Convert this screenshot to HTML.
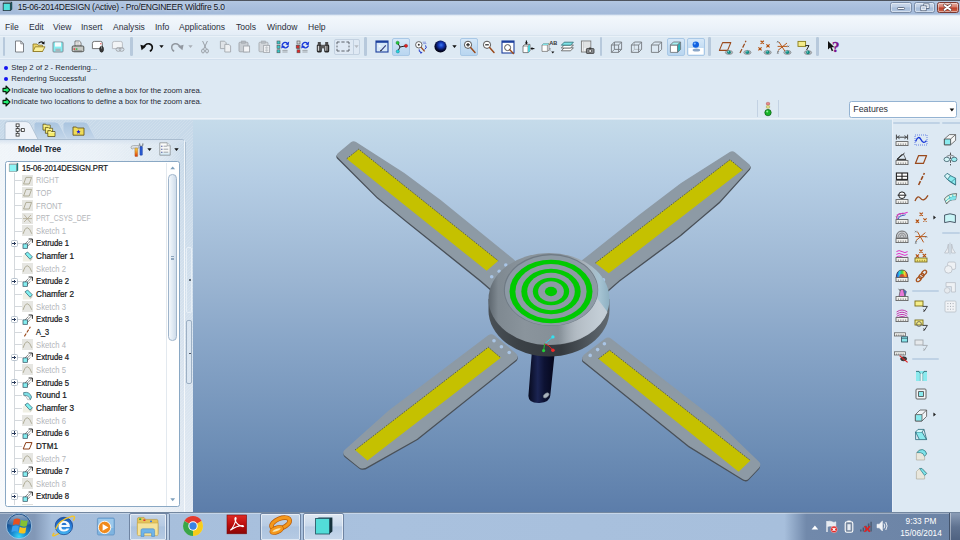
<!DOCTYPE html>
<html lang="en"><head><meta charset="utf-8"><title>15-06-2014DESIGN (Active) - Pro/ENGINEER Wildfire 5.0</title>
<style>
html,body{margin:0;padding:0}
body{width:960px;height:540px;overflow:hidden;position:relative;background:#dfe9f5;
 font-family:"Liberation Sans",sans-serif;color:#1a1a1a}
.a{position:absolute}
.t{position:absolute;white-space:nowrap;line-height:1}
svg{position:absolute;overflow:visible}
</style></head>
<body>
<div class="a" style="left:193px;top:119px;width:699px;height:393px;background:linear-gradient(180deg,#c5dbea 0%,#b5cde4 15.3%,#9bb5d2 41%,#89a6c8 56.4%,#6c8db5 84.4%,#5c7daa 100%)"></div>
<svg width="960" height="540" viewBox="0 0 960 540" style="left:0;top:0">
<defs>
<linearGradient id="gWall" x1="0" x2="1" y1="0" y2="0"><stop offset="0" stop-color="#4a5157"/><stop offset=".25" stop-color="#3b4146"/><stop offset=".6" stop-color="#34393e"/><stop offset=".85" stop-color="#525a61"/><stop offset="1" stop-color="#626a71"/></linearGradient>
<linearGradient id="gCham" x1="0" x2="1" y1="0" y2="0"><stop offset="0" stop-color="#5d666e"/><stop offset=".08" stop-color="#7f8991"/><stop offset=".3" stop-color="#8a949c"/><stop offset=".6" stop-color="#858f97"/><stop offset=".8" stop-color="#a9b3bb"/><stop offset=".92" stop-color="#a5c3d2"/><stop offset="1" stop-color="#8eb0c2"/></linearGradient>
<linearGradient id="gShaft" x1="0" x2="1" y1="0" y2="0"><stop offset="0" stop-color="#070a1e"/><stop offset=".35" stop-color="#1b2452"/><stop offset=".6" stop-color="#0d1233"/><stop offset="1" stop-color="#05071a"/></linearGradient>
<linearGradient id="gHi" gradientUnits="userSpaceOnUse" x1="558" x2="600" y1="0" y2="0"><stop offset="0" stop-color="#b8c1c9" stop-opacity="0"/><stop offset=".45" stop-color="#b8c1c9" stop-opacity=".8"/><stop offset="1" stop-color="#c5ced6" stop-opacity=".95"/></linearGradient>
<clipPath id="vp"><rect x="193" y="119" width="699" height="393"/></clipPath>
</defs>
<g clip-path="url(#vp)">
<path d="M532 350 L528.4 396 Q528.6 403.5 539.5 403 Q550 402 550.3 395.5 L555 350 Z" fill="url(#gShaft)"/>
<ellipse cx="546.2" cy="395.4" rx="3.3" ry="2" transform="rotate(-38 546.2 395.4)" fill="#aab3bd" stroke="#6d7782" stroke-width=".6"/>
<path d="M351.0 144.3 Q353.0 142.6 355.2 144.0 L403.1 174.8 L439.8 202.1 L512.1 260.8 L529.6 277.4 L499.6 297.4 L481.1 281.3 L406.1 221.2 L377.7 198.0 L338.0 158.4 Q336.2 156.6 338.2 154.9 Z" fill="#4a5159" stroke="#4a5159" stroke-width="1.6" stroke-linejoin="round"/>
<path d="M351.4 142.9 Q353.4 141.2 355.6 142.6 L403.5 173.4 L440.2 200.7 L512.5 259.4 L530.0 276.0 L500.0 296.0 L481.5 279.9 L406.5 219.8 L378.1 196.6 L338.4 157.0 Q336.6 155.2 338.6 153.5 Z" fill="#8d9aa5" stroke="#8d9aa5" stroke-width="1.6" stroke-linejoin="round"/>
<polygon points="358.7,149.2 498.3,260.8 486.7,270.8 346.7,158.7" fill="#c5c100"/>
<polyline points="346.7,158.7 358.7,149.2 498.3,260.8" fill="none" stroke="#4b4f45" stroke-width=".8" stroke-dasharray="1.6 1.2"/>
<path d="M730.6 154.0 Q732.8 152.6 734.8 154.3 L748.8 165.9 Q750.8 167.6 749.1 169.5 L718.9 202.9 L697.3 221.2 L680.6 235.4 L618.9 281.2 L600.4 297.4 L570.4 277.4 L582.9 262.4 L640.2 216.8 L681.9 185.0 Z" fill="#4a5159" stroke="#4a5159" stroke-width="1.6" stroke-linejoin="round"/>
<path d="M730.2 152.6 Q732.4 151.2 734.4 152.9 L748.4 164.5 Q750.4 166.2 748.7 168.1 L718.5 201.5 L696.9 219.8 L680.2 234.0 L618.5 279.8 L600.0 296.0 L570.0 276.0 L582.5 261.0 L639.8 215.4 L681.5 183.6 Z" fill="#8d9aa5" stroke="#8d9aa5" stroke-width="1.6" stroke-linejoin="round"/>
<polygon points="730.0,159.7 742.5,170.0 608.7,273.3 595.3,263.0" fill="#c5c100"/>
<polyline points="595.3,263.0 730.0,159.7 742.5,170.0" fill="none" stroke="#4b4f45" stroke-width=".8" stroke-dasharray="1.6 1.2"/>
<path d="M488.9 337.4 Q491.6 335.4 494.2 337.6 L514.6 354.4 Q517.1 356.4 516.9 358.2 L516.7 359.0 Q516.6 360.0 515.8 360.6 L417.2 439.4 L365.1 468.7 L362.7 469.0 Q361.1 469.2 359.9 468.2 L345.4 456.6 Q344.2 455.6 344.3 454.3 L344.3 454.0 Q344.4 453.0 345.1 452.3 L389.7 412.2 Z" fill="#4a5159" stroke="#4a5159" stroke-width="1.6" stroke-linejoin="round"/>
<path d="M488.7 336.0 Q491.4 334.0 494.0 336.2 L514.4 353.0 Q516.9 355.0 516.6 356.8 L516.5 357.6 Q516.4 358.6 515.6 359.2 L417.0 438.0 L364.9 467.3 L362.5 467.6 Q360.9 467.8 359.7 466.8 L345.2 455.2 Q344.0 454.2 344.1 452.9 L344.1 452.6 Q344.2 451.6 344.9 450.9 L389.5 410.8 Z" fill="#8d9aa5" stroke="#8d9aa5" stroke-width="1.6" stroke-linejoin="round"/>
<polygon points="488.3,347.2 500.8,357.8 367.5,460.6 355.0,450.0" fill="#c5c100"/>
<polyline points="355.0,450.0 488.3,347.2 500.8,357.8" fill="none" stroke="#4b4f45" stroke-width=".8" stroke-dasharray="1.6 1.2"/>
<path d="M605.2 340.8 Q607.9 338.7 610.6 340.8 L713.4 420.6 L758.5 463.9 Q759.2 464.6 759.3 465.6 L759.3 466.0 Q759.4 467.4 758.3 468.6 L747.9 479.6 Q746.8 480.8 745.4 480.6 L745.0 480.5 Q744.0 480.4 743.1 479.9 L689.3 446.8 L583.7 361.9 Q582.9 361.3 582.8 360.3 L582.8 359.6 Q582.6 357.9 585.1 356.0 Z" fill="#4a5159" stroke="#4a5159" stroke-width="1.6" stroke-linejoin="round"/>
<path d="M605.4 339.4 Q608.1 337.3 610.8 339.4 L713.6 419.2 L758.7 462.5 Q759.4 463.2 759.5 464.2 L759.5 464.6 Q759.6 466.0 758.5 467.2 L748.1 478.2 Q747.0 479.4 745.6 479.2 L745.2 479.1 Q744.2 479.0 743.3 478.5 L689.5 445.4 L583.9 360.5 Q583.1 359.9 583.0 358.9 L583.0 358.2 Q582.8 356.5 585.3 354.6 Z" fill="#8d9aa5" stroke="#8d9aa5" stroke-width="1.6" stroke-linejoin="round"/>
<polygon points="609.6,350.2 750.4,460.4 738.6,471.7 598.4,358.7" fill="#c5c100"/>
<polyline points="598.4,358.7 609.6,350.2 750.4,460.4" fill="none" stroke="#4b4f45" stroke-width=".8" stroke-dasharray="1.6 1.2"/>
<circle cx="494.0" cy="340.8" r="1.8" fill="#a9c5e6"/>
<circle cx="501.4" cy="346.7" r="1.8" fill="#a9c5e6"/>
<circle cx="509.2" cy="352.5" r="1.8" fill="#a9c5e6"/>
<circle cx="604.4" cy="343.8" r="1.8" fill="#a9c5e6"/>
<circle cx="597.6" cy="349.6" r="1.8" fill="#a9c5e6"/>
<circle cx="590.2" cy="355.4" r="1.8" fill="#a9c5e6"/>
<circle cx="491.7" cy="276.7" r="1.8" fill="#a9c5e6"/>
<circle cx="499.2" cy="271.2" r="1.8" fill="#a9c5e6"/>
<circle cx="505.8" cy="265.0" r="1.8" fill="#a9c5e6"/>
<circle cx="603.5" cy="279.9" r="1.8" fill="#a9c5e6"/>
<path d="M488.5 299.0 L488.5 310.5 A60.5 46.0 0 0 0 609.5 310.5 L609.5 299.0 Z" fill="url(#gWall)"/>
<ellipse cx="549.0" cy="299.0" rx="60.5" ry="46.0" fill="url(#gCham)"/>
<path d="M556 345 A60.5 46 0 0 0 607.5 312 L597 298 A46.7 35.5 0 0 1 558 325.6 Z" fill="url(#gHi)"/>
<ellipse cx="551" cy="290" rx="47.2" ry="36" fill="#6f7a84"/>
<ellipse cx="551.3" cy="290.4" rx="46.4" ry="35.2" fill="#8d9aa5"/>
<ellipse cx="551" cy="291.5" rx="41.5" ry="31.8" fill="#00ca00"/>
<ellipse cx="551" cy="291.5" rx="35.6" ry="27.4" fill="#8d9aa5"/>
<ellipse cx="551" cy="291.5" rx="29.7" ry="22.7" fill="#00ca00"/>
<ellipse cx="551" cy="291.5" rx="23.8" ry="18.7" fill="#8d9aa5"/>
<ellipse cx="551" cy="291.5" rx="18.2" ry="13.7" fill="#00ca00"/>
<ellipse cx="551" cy="291.5" rx="12.9" ry="10.2" fill="#8d9aa5"/>
<ellipse cx="551" cy="291.5" rx="6.1" ry="4.7" fill="#00ca00"/>
<path d="M544.6 343.8 L552.9 336.9" stroke="#2fd6e6" stroke-width="1" fill="none"/><circle cx="552.9" cy="336.9" r="1.7" fill="#35e0f0"/>
<path d="M544.6 343.8 L543.6 350.6" stroke="#1fc030" stroke-width="1" fill="none"/><circle cx="543.6" cy="350.6" r="1.6" fill="#22d038"/>
<path d="M544.6 343.8 Q549 344.5 552.9 350.2" stroke="#d02020" stroke-width="1" fill="none"/><circle cx="552.9" cy="350.2" r="1.8" fill="#f02828"/>
</g>
</svg>
<div class="a" style="left:0;top:0;width:960px;height:119.5px;background:#dde9f3"></div>
<div class="a" style="left:0;top:0;width:960px;height:17px;background:linear-gradient(180deg,#4a4f58 0,#4f5560 .7px,#b3c7e1 1.1px,#adc2df 4px,#a8bedc 8px,#a4bbda 13.9px,#c4d4e8 14.8px,#eaf2f9 15.7px,#f2f7fc 17px)"></div>
<svg width="11" height="11" viewBox="0 0 11 11" style="left:1.6px;top:1.4px"><path d="M1.2 2.3 L2.4 1.2 H9.9 L8.3 2.3Z" fill="#e8f4f4" stroke="#26343c" stroke-width=".6"/><path d="M8.3 2.3 L9.9 1.2 V8.5 L8.3 9.6Z" fill="#0b5c64" stroke="#1a2a32" stroke-width=".5"/><rect x="1.2" y="2.3" width="7.1" height="7.3" fill="#50e2de" stroke="#26343c" stroke-width=".8"/></svg>
<div class="t" style="left:17.7px;top:3.3px;font-size:8.5px;color:#10141c;letter-spacing:-.24px;text-shadow:0 0 3px rgba(255,255,255,.7)">15-06-2014DESIGN (Active) - Pro/ENGINEER Wildfire 5.0</div>
<div class="a" style="left:890.3px;top:1.6px;width:21.5px;height:11.8px;box-sizing:border-box;border:1px solid #7a8ca6;border-radius:2.5px;background:linear-gradient(180deg,#cbd9eb 0,#bccde4 48%,#a6bcd9 52%,#b2c6e0 100%);box-shadow:inset 0 0 0 .7px rgba(255,255,255,.6)"></div>
<div class="a" style="left:914.0px;top:1.6px;width:21.2px;height:11.8px;box-sizing:border-box;border:1px solid #7a8ca6;border-radius:2.5px;background:linear-gradient(180deg,#cbd9eb 0,#bccde4 48%,#a6bcd9 52%,#b2c6e0 100%);box-shadow:inset 0 0 0 .7px rgba(255,255,255,.6)"></div>
<div class="a" style="left:937.0px;top:1.6px;width:21.8px;height:11.8px;box-sizing:border-box;border:1px solid #7a3a32;border-radius:2.5px;background:linear-gradient(180deg,#e6b0a4 0,#d47866 48%,#bc3e28 52%,#cc6448 100%);box-shadow:inset 0 0 0 .7px rgba(255,255,255,.6)"></div>
<div class="a" style="left:897px;top:7.1px;width:8.2px;height:3.4px;background:#fdfdfe;border:.8px solid #66748a;border-radius:1.2px;box-sizing:border-box"></div>
<svg width="10" height="9" viewBox="0 0 10 9" style="left:919.6px;top:3px"><rect x="3.8" y=".9" width="5.2" height="4.6" fill="#b9c9df" stroke="#4f5d73" stroke-width=".8"/><rect x="4.6" y="1.8" width="3.6" height="2.8" fill="none" stroke="#fff" stroke-width=".8"/><rect x=".9" y="2.9" width="5.2" height="4.8" fill="#b9c9df" stroke="#4f5d73" stroke-width=".8"/><rect x="1.7" y="3.8" width="3.6" height="3" fill="none" stroke="#fff" stroke-width=".8"/></svg>
<svg width="9" height="7" viewBox="0 0 9 7" style="left:943.3px;top:4px"><path d="M1.6 1.2 L7.4 5.8 M7.4 1.2 L1.6 5.8" stroke="#5b3a3a" stroke-width="3" stroke-linecap="round"/><path d="M1.6 1.2 L7.4 5.8 M7.4 1.2 L1.6 5.8" stroke="#fff" stroke-width="1.9" stroke-linecap="round"/></svg>
<div class="a" style="left:0;top:17px;width:960px;height:19px;background:linear-gradient(180deg,#f2f7fc 0,#ebf2f9 55%,#e3ecf6 100%)"></div>
<div class="t" style="left:5px;top:23.1px;font-size:8.55px;color:#2a2f3a">File</div>
<div class="t" style="left:29px;top:23.1px;font-size:8.55px;color:#2a2f3a">Edit</div>
<div class="t" style="left:53px;top:23.1px;font-size:8.55px;color:#2a2f3a">View</div>
<div class="t" style="left:81px;top:23.1px;font-size:8.55px;color:#2a2f3a">Insert</div>
<div class="t" style="left:113px;top:23.1px;font-size:8.55px;color:#2a2f3a">Analysis</div>
<div class="t" style="left:155px;top:23.1px;font-size:8.55px;color:#2a2f3a">Info</div>
<div class="t" style="left:179px;top:23.1px;font-size:8.55px;color:#2a2f3a">Applications</div>
<div class="t" style="left:236px;top:23.1px;font-size:8.55px;color:#2a2f3a">Tools</div>
<div class="t" style="left:267px;top:23.1px;font-size:8.55px;color:#2a2f3a">Window</div>
<div class="t" style="left:308px;top:23.1px;font-size:8.55px;color:#2a2f3a">Help</div>
<div class="a" style="left:0;top:35.4px;width:960px;height:1px;background:#d8e4ef"></div>
<div class="a" style="left:0;top:36.4px;width:960px;height:21.6px;background:#dde9f3"></div>
<div class="a" style="left:0;top:36.4px;width:960px;height:1px;background:#e9f1f8"></div>
<div class="a" style="left:0;top:58px;width:960px;height:1px;background:#eaf1f9"></div>
<div class="a" style="left:0;top:59px;width:960px;height:1px;background:#d2dfed"></div>
<div class="t" style="left:11.3px;top:63.7px;font-size:7.7px;color:#252a33">Step 2 of 2 - Rendering...</div>
<div class="a" style="left:4.1px;top:65.9px;width:3.9px;height:3.9px;border-radius:2px;background:#1414f0"></div>
<div class="t" style="left:11.3px;top:75.1px;font-size:7.7px;color:#252a33">Rendering Successful</div>
<div class="a" style="left:4.1px;top:77.3px;width:3.9px;height:3.9px;border-radius:2px;background:#1414f0"></div>
<div class="t" style="left:11.3px;top:86.6px;font-size:7.7px;color:#252a33">Indicate two locations to define a box for the zoom area.</div>
<svg width="9" height="10" viewBox="0 0 9 10" style="left:1.6px;top:85.3px"><path d="M1 3.4 H4 V1 L8 5 L4 9 V6.6 H1Z" fill="#1ff070" stroke="#0a1c0c" stroke-width="1.1" stroke-linejoin="round"/></svg>
<div class="t" style="left:11.3px;top:98.0px;font-size:7.7px;color:#252a33">Indicate two locations to define a box for the zoom area.</div>
<svg width="9" height="10" viewBox="0 0 9 10" style="left:1.6px;top:96.7px"><path d="M1 3.4 H4 V1 L8 5 L4 9 V6.6 H1Z" fill="#1ff070" stroke="#0a1c0c" stroke-width="1.1" stroke-linejoin="round"/></svg>
<div class="a" style="left:0;top:118.2px;width:960px;height:1.3px;background:#edf3f9"></div>
<div class="a" style="left:849.4px;top:101px;width:107.2px;height:16.6px;box-sizing:border-box;border:1px solid #94b3d2;border-radius:2.5px;background:#fff"></div>
<div class="t" style="left:853.3px;top:104.6px;font-size:8.8px;color:#2a2f3a">Features</div>
<svg width="6" height="4" viewBox="0 0 6 4" style="left:948.6px;top:107.6px"><path d="M.6 .5 H5.2 L2.9 3.4Z" fill="#111"/></svg>
<div class="a" style="left:756.6px;top:100px;width:1px;height:17px;background:#c3d2e3"></div>
<div class="a" style="left:778.4px;top:100px;width:1px;height:17px;background:#c3d2e3"></div>
<svg width="8" height="15" viewBox="0 0 8 15" style="left:763.6px;top:101.6px"><rect x="2.4" y=".4" width="3.2" height="2.6" rx=".8" fill="#e88a8a" stroke="#b05050" stroke-width=".5"/><rect x="2.4" y="3.6" width="3.2" height="2.6" rx=".8" fill="#e6e08a" stroke="#a09a40" stroke-width=".5"/><circle cx="4" cy="10.6" r="3.2" fill="#18b428" stroke="#0a5a14" stroke-width=".7"/><circle cx="3.2" cy="9.6" r="1" fill="#8ff09a"/></svg>
<div class="a" style="left:2.5px;top:37.2px;width:2.5px;height:19.2px;background:#b7c9dc;border-radius:1.2px"></div>
<svg width="11" height="13" viewBox="0 0 11 13" style="left:14.0px;top:40.2px"><path d="M1.5 1 H6.8 L9.5 3.8 V12 H1.5Z" fill="#fff" stroke="#70757c" stroke-width=".9" stroke-linejoin="round"/><path d="M6.8 1 V3.8 H9.5" fill="none" stroke="#70757c" stroke-width=".8"/></svg>
<svg width="14" height="13" viewBox="0 0 14 13" style="left:31.7px;top:40.2px"><path d="M1 4 H5 L6 5.2 H10.5 V11.5 H1Z" fill="#ecd66a" stroke="#8a7420" stroke-width=".8" stroke-linejoin="round"/><path d="M1 11.5 L3.2 6.8 H13 L10.5 11.5Z" fill="#faf09a" stroke="#8a7420" stroke-width=".8" stroke-linejoin="round"/><path d="M6.5 3.4 Q9 .8 11.4 2.8" fill="none" stroke="#111" stroke-width="1.1"/><path d="M12.6 1.2 L12.4 4.6 L9.6 3.4Z" fill="#111"/></svg>
<svg width="12" height="12" viewBox="0 0 12 12" style="left:52.3px;top:40.7px"><rect x="1" y="1" width="10" height="10" rx=".8" fill="#84eef2" stroke="#7a858e" stroke-width=".9"/><rect x="3" y="1.4" width="6" height="4.2" fill="#f6fcfd"/><rect x="3.4" y="7.6" width="5.2" height="3" fill="#aab3ba"/></svg>
<svg width="14" height="13" viewBox="0 0 14 13" style="left:71.3px;top:40.2px"><path d="M4 6 V1 H8.4 L10 2.6 V6Z" fill="#fff" stroke="#555" stroke-width=".8"/><path d="M5.2 2.8 H8.4 M5.2 4.2 H8.8" stroke="#888" stroke-width=".6"/><rect x="1.2" y="6" width="11.6" height="5.6" rx="1" fill="#c6c8c4" stroke="#454846" stroke-width=".9"/><rect x="2.6" y="8.4" width="1.6" height="1.3" fill="#e02020"/><rect x="4.8" y="8.4" width="1.6" height="1.3" fill="#20b030"/><rect x="3" y="10.6" width="8" height="1.6" fill="#6a6d6b"/></svg>
<svg width="14" height="13" viewBox="0 0 14 13" style="left:91.0px;top:40.2px"><path d="M1.4 3.4 Q1.4 1.4 3.4 1.4 H9.6 Q11.4 1.4 11.4 3.2 V8.6 H1.4Z" fill="#fff" stroke="#666" stroke-width=".9"/><rect x="9.3" y="3.2" width="1.1" height="1.1" fill="#e02020"/><ellipse cx="10.6" cy="9.2" rx="1.9" ry="3" fill="#3b3b3b" stroke="#111" stroke-width=".6"/><path d="M10.6 6.4 V8.6" stroke="#ccc" stroke-width=".6"/></svg>
<svg width="14" height="13" viewBox="0 0 14 13" style="left:111.0px;top:40.2px"><path d="M1.4 3.4 Q1.4 1.4 3.4 1.4 H9.6 Q11.4 1.4 11.4 3.2 V8.6 H1.4Z" fill="#f2f4f6" stroke="#b4b8bd" stroke-width=".9"/><ellipse cx="7.4" cy="9.4" rx="2.4" ry="1.9" fill="none" stroke="#a4a8ad" stroke-width="1"/><ellipse cx="10.6" cy="9.4" rx="2.4" ry="1.9" fill="none" stroke="#a4a8ad" stroke-width="1"/></svg>
<div class="a" style="left:130.4px;top:37.2px;width:2.5px;height:19.2px;background:#b7c9dc;border-radius:1.2px"></div>
<svg width="14" height="11" viewBox="0 0 14 11" style="left:140.3px;top:41.2px"><path d="M3.4 6.8 Q5.4 2.2 9.2 2.8 Q12.8 3.6 12.2 7.4 Q11.8 9.4 9.8 10.2" fill="none" stroke="#111" stroke-width="1.7"/><path d="M.4 3.8 L6 5.2 L1.6 9.2Z" fill="#111"/></svg>
<svg width="5" height="3.4" viewBox="0 0 5 3.4" style="left:159.2px;top:45.4px"><path d="M.3 .3 H4.7 L2.5 3.1Z" fill="#111"/></svg>
<svg width="14" height="11" viewBox="0 0 14 11" style="left:169.5px;top:41.2px"><path d="M10.6 6.8 Q8.6 2.2 4.8 2.8 Q1.2 3.6 1.8 7.4 Q2.2 9.4 4.2 10.2" fill="none" stroke="#9298a0" stroke-width="1.5"/><path d="M13.6 3.8 L8 5.2 L12.4 9.2Z" fill="#9298a0"/></svg>
<svg width="5" height="3.4" viewBox="0 0 5 3.4" style="left:187.5px;top:45.4px"><path d="M.3 .3 H4.7 L2.5 3.1Z" fill="#aab0b8"/></svg>
<svg width="10" height="14" viewBox="0 0 10 14" style="left:200.0px;top:39.7px"><path d="M2.6 1 L6.4 9.2 M7.4 1 L3.6 9.2" stroke="#9aa0a7" stroke-width="1"/><ellipse cx="3" cy="11" rx="1.4" ry="2" fill="none" stroke="#9aa0a7" stroke-width="1"/><ellipse cx="7" cy="11" rx="1.4" ry="2" fill="none" stroke="#9aa0a7" stroke-width="1"/></svg>
<svg width="13" height="13" viewBox="0 0 13 13" style="left:218.5px;top:40.2px"><path d="M1.4 1.2 H5.6 L7.2 2.8 V8.6 H1.4Z" fill="#dfe3e7" stroke="#a3a8ae" stroke-width=".9"/><path d="M5.8 4.4 H10 L11.6 6 V12 H5.8Z" fill="#eef0f2" stroke="#a3a8ae" stroke-width=".9"/></svg>
<svg width="13" height="13" viewBox="0 0 13 13" style="left:237.7px;top:40.2px"><rect x="1" y="2.2" width="9" height="9.6" rx="1" fill="#c9ced3" stroke="#a0a5ab" stroke-width=".9"/><rect x="3.6" y="1" width="3.8" height="2.2" fill="#b3b8be" stroke="#a0a5ab" stroke-width=".6"/><rect x="5.6" y="6" width="6" height="6" fill="#f3f4f6" stroke="#a0a5ab" stroke-width=".9"/></svg>
<svg width="13" height="13" viewBox="0 0 13 13" style="left:258.2px;top:40.2px"><rect x="1" y="2.2" width="9" height="9.6" rx="1" fill="#d3d7db" stroke="#a6abb1" stroke-width=".9"/><rect x="3.6" y="1" width="3.8" height="2.2" fill="#b9bec4" stroke="#a6abb1" stroke-width=".6"/><rect x="5.6" y="5.4" width="6" height="7" fill="#f3f4f6" stroke="#a6abb1" stroke-width=".9"/><path d="M7 7.4 H10.4 M7 9 H10.4 M7 10.6 H10.4 M8.7 6 V12" stroke="#b4b8be" stroke-width=".6"/></svg>
<svg width="14" height="14" viewBox="0 0 14 14" style="left:276.3px;top:39.7px"><rect x="1" y="1" width="3" height="3" fill="#35c8c8" stroke="#555" stroke-width=".6"/><rect x="1" y="5.4" width="3" height="3" fill="#35c8c8" stroke="#555" stroke-width=".6"/><rect x="1" y="9.8" width="3" height="3" fill="#35c8c8" stroke="#555" stroke-width=".6"/><path d="M6 4.8 Q8.6 .6 11.6 3.6" fill="none" stroke="#1838d8" stroke-width="1.3"/><path d="M13.2 1.6 L12.6 5.6 L9.4 4.2Z" fill="#1838d8"/><path d="M12.6 5.6 Q10 9.4 7 6.8" fill="none" stroke="#1838d8" stroke-width="1.3"/><path d="M5.2 8.6 L5.8 4.8 L9 6.4Z" fill="#1838d8"/><path d="M6.4 10.4 H11.6 M6.4 12 H11.6" stroke="#9a9ea4" stroke-width=".9"/></svg>
<svg width="14" height="14" viewBox="0 0 14 14" style="left:295.5px;top:39.7px"><rect x="1" y="1" width="3" height="3" fill="#d0d4d8" stroke="#555" stroke-width=".6"/><rect x="1" y="5.4" width="3" height="3" fill="#d0d4d8" stroke="#555" stroke-width=".6"/><rect x="1" y="9.8" width="3" height="3" fill="#e02828" stroke="#555" stroke-width=".6"/><path d="M6 4.8 Q8.6 .6 11.6 3.6" fill="none" stroke="#1838d8" stroke-width="1.3"/><path d="M13.2 1.6 L12.6 5.6 L9.4 4.2Z" fill="#1838d8"/><path d="M12.6 5.6 Q10 9.4 7 6.8" fill="none" stroke="#1838d8" stroke-width="1.3"/><path d="M5.2 8.6 L5.8 4.8 L9 6.4Z" fill="#1838d8"/><path d="M6.4 10.4 H11.6 M6.4 12 H11.6" stroke="#9a9ea4" stroke-width=".9"/></svg>
<svg width="3.4" height="3.4" viewBox="0 0 3.4 3.4" style="left:295.8px;top:44.8px"><rect x=".2" y=".2" width="3" height="3" fill="#e02828" stroke="#555" stroke-width=".6"/></svg>
<svg width="14" height="12" viewBox="0 0 14 12" style="left:316.3px;top:40.7px"><rect x=".8" y="3.4" width="5" height="8" rx="1.3" fill="#2a2a2a"/><rect x="8.2" y="3.4" width="5" height="8" rx="1.3" fill="#2a2a2a"/><rect x="1.8" y="1" width="3" height="3" fill="#4a4a4a"/><rect x="9.2" y="1" width="3" height="3" fill="#4a4a4a"/><rect x="5.4" y="3.8" width="3.2" height="3.6" fill="#5a5a5a"/><rect x="1.8" y="4.8" width="1.3" height="5" fill="#d0d0d0"/><rect x="9.2" y="4.8" width="1.3" height="5" fill="#d0d0d0"/><rect x="3.6" y="4.8" width=".8" height="5" fill="#8a8a8a"/><rect x="11" y="4.8" width=".8" height="5" fill="#8a8a8a"/></svg>
<div class="a" style="left:334.2px;top:38.6px;width:26.3px;height:16.8px;box-sizing:border-box;border:1px solid #c3d1e0;border-radius:2px;background:#dfe9f4"></div>
<div class="a" style="left:352.8px;top:39.2px;width:1px;height:15.6px;background:#c3d1e0"></div>
<svg width="14" height="11" viewBox="0 0 14 11" style="left:336.4px;top:41.2px"><path d="M1 3.2 V1 H3.6 M5.4 1 H8.6 M10.4 1 H13 V3.2 M13 4.6 V6.4 M13 7.8 V10 H10.4 M8.6 10 H5.4 M3.6 10 H1 V7.8 M1 6.4 V4.6" fill="none" stroke="#5c626a" stroke-width="1"/></svg>
<svg width="5" height="3.4" viewBox="0 0 5 3.4" style="left:354.2px;top:45.4px"><path d="M.3 .3 H4.7 L2.5 3.1Z" fill="#b4bac2"/></svg>
<div class="a" style="left:364.2px;top:37.2px;width:2.5px;height:19.2px;background:#b7c9dc;border-radius:1.2px"></div>
<svg width="14" height="13" viewBox="0 0 14 13" style="left:374.7px;top:40.2px"><rect x="1" y="1" width="12" height="11" fill="#d6e7f8" stroke="#1c3f9c" stroke-width="1.1"/><rect x="1" y="1" width="12" height="1.8" fill="#1c3f9c"/><path d="M3.6 4.6 L6.4 6.2 L3.8 7.6Z" fill="#f4f9fe"/><path d="M6 10.6 L10.8 5.4" stroke="#333a78" stroke-width="1.1"/><path d="M5 11.6 L5.6 9.8 L6.8 10.8Z" fill="#111"/></svg>
<div class="a" style="left:392.2px;top:38.0px;width:17.8px;height:18.0px;box-sizing:border-box;border:1px solid #a9c8e6;border-radius:2px;background:linear-gradient(180deg,#d6e8f8 0,#c3dcf3 55%,#b9d6f0 100%)"></div>
<svg width="14" height="14" viewBox="0 0 14 14" style="left:393.8px;top:39.7px"><path d="M3.6 2.8 L6 7 L12 5.8 M6 7 L3.8 11.4" stroke="#222" stroke-width="1" fill="none"/><circle cx="3.6" cy="2.8" r="1.6" fill="#22c838" stroke="#0a6a18" stroke-width=".4"/><circle cx="12" cy="5.8" r="1.6" fill="#e82020" stroke="#7a0c0c" stroke-width=".4"/><circle cx="3.8" cy="11.4" r="1.6" fill="#28d6e0" stroke="#0a6a78" stroke-width=".4"/></svg>
<svg width="14" height="14" viewBox="0 0 14 14" style="left:413.8px;top:39.7px"><circle cx="4.8" cy="4.8" r="3.2" fill="#fff" stroke="#555" stroke-width=".9"/><circle cx="4.8" cy="4.8" r="1" fill="#333"/><path d="M7 7.2 L10.6 11.4" stroke="#9a4a1c" stroke-width="1.3"/><path d="M8.6 2.2 H12 M9.2 3.6 H12.4" stroke="#7a8ad8" stroke-width=".8"/><path d="M11.6 5.4 Q13.4 8.4 10.6 9.4" fill="none" stroke="#2038c8" stroke-width="1"/><path d="M5.2 9.4 Q4.4 12 7.4 12.6" fill="none" stroke="#2038c8" stroke-width="1"/><path d="M6.4 11.2 L8.6 12.8 L6.4 13.8Z" fill="#2038c8"/></svg>
<svg width="13" height="13" viewBox="0 0 13 13" style="left:434.0px;top:40.2px"><defs><radialGradient id="gSph" cx=".55" cy=".38" r=".6"><stop offset="0" stop-color="#3a78f0"/><stop offset=".35" stop-color="#1438b8"/><stop offset=".75" stop-color="#060c3a"/><stop offset="1" stop-color="#02030f"/></radialGradient></defs><circle cx="6.5" cy="6.5" r="6.1" fill="url(#gSph)"/></svg>
<svg width="5" height="3.4" viewBox="0 0 5 3.4" style="left:452.2px;top:45.4px"><path d="M.3 .3 H4.7 L2.5 3.1Z" fill="#111"/></svg>
<div class="a" style="left:460.3px;top:38.0px;width:18.0px;height:18.0px;box-sizing:border-box;border:1px solid #a9c8e6;border-radius:2px;background:linear-gradient(180deg,#d6e8f8 0,#c3dcf3 55%,#b9d6f0 100%)"></div>
<svg width="13" height="13.5" viewBox="0 0 13 13.5" style="left:462.9px;top:40.0px"><circle cx="5" cy="4.8" r="3.6" fill="#fff" stroke="#555" stroke-width="1"/><path d="M7.6 7.6 L12 12.4" stroke="#9a4a1c" stroke-width="1.5" stroke-linecap="round"/><path d="M3.2 4.8 H6.8" stroke="#222" stroke-width="1.2"/><path d="M5 3 V6.6" stroke="#222" stroke-width="1.2"/></svg>
<svg width="13" height="13.5" viewBox="0 0 13 13.5" style="left:482.4px;top:40.0px"><circle cx="5" cy="4.8" r="3.6" fill="#fff" stroke="#555" stroke-width="1"/><path d="M7.6 7.6 L12 12.4" stroke="#9a4a1c" stroke-width="1.5" stroke-linecap="round"/><path d="M3.2 4.8 H6.8" stroke="#222" stroke-width="1.2"/></svg>
<svg width="14" height="14" viewBox="0 0 14 14" style="left:501.0px;top:39.7px"><rect x="1" y="1" width="12" height="12" fill="#fff" stroke="#1c3f9c" stroke-width="1.1"/><rect x="1" y="1" width="12" height="1.8" fill="#1c3f9c"/><circle cx="6.6" cy="7.6" r="3" fill="#fff" stroke="#555" stroke-width="1"/><path d="M8.8 9.8 L12.4 13.4" stroke="#9a4a1c" stroke-width="1.4" stroke-linecap="round"/></svg>
<svg width="14" height="14" viewBox="0 0 14 14" style="left:520.5px;top:39.7px"><path d="M2 6 L4 4.4 H9 V11 L7 12.6 H2Z" fill="#fff" stroke="#666" stroke-width=".8" stroke-linejoin="round"/><path d="M7 6 V12.6 M2 6 H7 L9 4.4" fill="none" stroke="#666" stroke-width=".7"/><path d="M7 6 L9 4.4 V11 L7 12.6Z" fill="#48d0d8"/><path d="M5.4 .6 V3.4" stroke="#111" stroke-width="1.1"/><path d="M3.8 2.6 H7 L5.4 4.6Z" fill="#111"/><path d="M13.4 8.6 H10.6" stroke="#111" stroke-width="1.1"/><path d="M11.4 7 V10.2 L9.4 8.6Z" fill="#111"/></svg>
<svg width="15" height="14" viewBox="0 0 15 14" style="left:540.8px;top:39.7px"><path d="M1 5 L2.6 3.6 H8 V10 L6.4 11.4 H1Z" fill="#fff" stroke="#777" stroke-width=".8" stroke-linejoin="round"/><path d="M1 5 H6.4 L8 3.6 M6.4 5 V11.4" fill="none" stroke="#777" stroke-width=".7"/><path d="M1 5 L2.6 3.6 H8 L6.4 5Z" fill="#7fe0e4"/><text x="8.2" y="5.2" font-family="Liberation Sans,sans-serif" font-size="5.6" font-weight="bold" fill="#333">AB</text><path d="M9 8.4 V10.6" stroke="#333" stroke-width=".9" stroke-dasharray="1 .8"/><path d="M10.2 11.6 H13.4 L11.8 13.6Z" fill="#111"/></svg>
<svg width="15" height="13" viewBox="0 0 15 13" style="left:560.0px;top:40.2px"><path d="M1.4 10.8 L4.2 7.8 H13.4 L10.6 10.8Z" fill="#fff" stroke="#555" stroke-width=".8" stroke-linejoin="round"/><path d="M1.4 8 L4.2 5 H13.4 L10.6 8Z" fill="#fff" stroke="#555" stroke-width=".8" stroke-linejoin="round"/><path d="M1.4 5.2 L4.2 2.2 H13.4 L10.6 5.2Z" fill="#7fe4e8" stroke="#2a6a72" stroke-width=".8" stroke-linejoin="round"/></svg>
<svg width="15" height="14" viewBox="0 0 15 14" style="left:579.5px;top:39.7px"><rect x="1.4" y="1" width="9.4" height="11" fill="#f1f2f3" stroke="#777" stroke-width=".9"/><path d="M3.4 1 V12 M3.4 3 H10.8 M3.4 5 H10.8 M3.4 7 H10.8" stroke="#b8bcc0" stroke-width=".6"/><rect x="6.4" y="8.6" width="7.6" height="4.8" rx=".6" fill="#8a8d90" stroke="#333" stroke-width=".8"/><circle cx="10.2" cy="11" r="1.5" fill="#e8e8e8" stroke="#333" stroke-width=".6"/><rect x="8.8" y="7.6" width="2.4" height="1.2" fill="#333"/></svg>
<div class="a" style="left:599.5px;top:37.2px;width:2.5px;height:19.2px;background:#b7c9dc;border-radius:1.2px"></div>
<svg width="13" height="14" viewBox="0 0 13 14" style="left:610.2px;top:39.7px"><path d="M4.4 2 V9.4 H11.6 M4.4 9.4 L1.4 12.4" fill="none" stroke="#74797f" stroke-width=".9"/><path d="M1.4 5 H8.6 V12.4 H1.4Z" fill="none" stroke="#74797f" stroke-width=".9"/><path d="M1.4 5 L4.4 2 H11.6 L8.6 5" fill="none" stroke="#74797f" stroke-width=".9"/><path d="M11.6 2 V9.4 L8.6 12.4" fill="none" stroke="#74797f" stroke-width=".9"/></svg>
<svg width="13" height="14" viewBox="0 0 13 14" style="left:630.2px;top:39.7px"><path d="M4.4 2 V9.4 H11.6 M4.4 9.4 L1.4 12.4" fill="none" stroke="#a9adb2" stroke-width=".7"/><path d="M1.4 5 H8.6 V12.4 H1.4Z" fill="none" stroke="#74797f" stroke-width=".9"/><path d="M1.4 5 L4.4 2 H11.6 L8.6 5" fill="none" stroke="#74797f" stroke-width=".9"/><path d="M11.6 2 V9.4 L8.6 12.4" fill="none" stroke="#74797f" stroke-width=".9"/></svg>
<svg width="13" height="14" viewBox="0 0 13 14" style="left:649.8px;top:39.7px"><path d="M1.4 5 H8.6 V12.4 H1.4Z" fill="none" stroke="#74797f" stroke-width=".9"/><path d="M1.4 5 L4.4 2 H11.6 L8.6 5" fill="none" stroke="#74797f" stroke-width=".9"/><path d="M11.6 2 V9.4 L8.6 12.4" fill="none" stroke="#74797f" stroke-width=".9"/></svg>
<div class="a" style="left:667.0px;top:38.0px;width:17.7px;height:18.0px;box-sizing:border-box;border:1px solid #a9c8e6;border-radius:2px;background:linear-gradient(180deg,#d6e8f8 0,#c3dcf3 55%,#b9d6f0 100%)"></div>
<svg width="13" height="14" viewBox="0 0 13 14" style="left:669.3px;top:39.7px"><path d="M1.4 5 H8.6 V12.4 H1.4Z" fill="#fff" stroke="#74797f" stroke-width=".9"/><path d="M1.4 5 L4.4 2 H11.6 L8.6 5Z" fill="#a6f0f2" stroke="#74797f" stroke-width=".9"/><path d="M11.6 2 V9.4 L8.6 12.4 V5Z" fill="#2ab6bc" stroke="#74797f" stroke-width=".9"/></svg>
<div class="a" style="left:687.0px;top:38.0px;width:17.7px;height:18.0px;box-sizing:border-box;border:1px solid #a9c8e6;border-radius:2px;background:linear-gradient(180deg,#d6e8f8 0,#c3dcf3 55%,#b9d6f0 100%)"></div>
<svg width="16" height="15" viewBox="0 0 16 15" style="left:687.8px;top:39.6px"><rect x=".4" y="8" width="15.2" height="6.6" fill="#fff"/><ellipse cx="8.4" cy="10" rx="3.8" ry="1.6" fill="#8aa6c8"/><circle cx="7.8" cy="4.6" r="3.2" fill="#1060e0"/><circle cx="6.8" cy="3.6" r="1.1" fill="#78b4ff"/></svg>
<div class="a" style="left:708.0px;top:37.2px;width:2.5px;height:19.2px;background:#b7c9dc;border-radius:1.2px"></div>
<svg width="15" height="14" viewBox="0 0 15 14" style="left:717.5px;top:39.7px"><path d="M1.4 10.4 L4.6 2.6 H12.8 L9.6 10.4Z" fill="none" stroke="#9a4a1c" stroke-width="1.1" stroke-linejoin="round"/><ellipse cx="11" cy="12.4" rx="3.7" ry="2" fill="#b4b9bd" stroke="#6c7176" stroke-width=".5"/><circle cx="11" cy="12.2" r="1.8" fill="#0f8a82"/><circle cx="10.5" cy="11.7" r=".6" fill="#8ae8de"/></svg>
<svg width="13" height="14" viewBox="0 0 13 14" style="left:738.2px;top:39.7px"><path d="M2 13 L8 .8" stroke="#9a4a1c" stroke-width="1.2" stroke-dasharray="4.4 1.6"/><ellipse cx="9.4" cy="12.4" rx="3.7" ry="2" fill="#b4b9bd" stroke="#6c7176" stroke-width=".5"/><circle cx="9.4" cy="12.2" r="1.8" fill="#0f8a82"/><circle cx="8.9" cy="11.7" r=".6" fill="#8ae8de"/></svg>
<svg width="14" height="14" viewBox="0 0 14 14" style="left:756.6px;top:39.7px"><path d="M3.6 .8 L6.8 3.8 M6.8 .8 L3.6 3.8 M1.4 7.4 L4.6 10.4 M4.6 7.4 L1.4 10.4 M9.4 4.4 L12.6 7.4 M12.6 4.4 L9.4 7.4" stroke="#b4500e" stroke-width="1.2"/><ellipse cx="10.6" cy="12.4" rx="3.7" ry="2" fill="#b4b9bd" stroke="#6c7176" stroke-width=".5"/><circle cx="10.6" cy="12.2" r="1.8" fill="#0f8a82"/><circle cx="10.1" cy="11.7" r=".6" fill="#8ae8de"/></svg>
<svg width="15" height="14" viewBox="0 0 15 14" style="left:775.8px;top:39.7px"><path d="M3 2 L9.4 12 M11 3 L2 10.4 M1.6 6.4 H11.6" stroke="#b85a1c" stroke-width="1"/><path d="M1 1 L2.6 2.6 M2.6 1 L1 2.6 M11.6 5.6 L13.2 7.2 M13.2 5.6 L11.6 7.2 M1 11.4 H2.8 L1 13.2 H2.8" stroke="#555" stroke-width=".6" fill="none"/><ellipse cx="11.4" cy="12.4" rx="3.7" ry="2" fill="#b4b9bd" stroke="#6c7176" stroke-width=".5"/><circle cx="11.4" cy="12.2" r="1.8" fill="#0f8a82"/><circle cx="10.9" cy="11.7" r=".6" fill="#8ae8de"/></svg>
<svg width="14" height="14" viewBox="0 0 14 14" style="left:796.6px;top:39.7px"><rect x="1" y="1.4" width="7.6" height="5" fill="#f4ec8a" stroke="#8a7d1c" stroke-width=".9"/><path d="M8.4 5.6 H12 L9.6 10" fill="none" stroke="#222" stroke-width="1"/><ellipse cx="11" cy="12.6" rx="3.7" ry="2" fill="#b4b9bd" stroke="#6c7176" stroke-width=".5"/><circle cx="11" cy="12.4" r="1.8" fill="#0f8a82"/><circle cx="10.5" cy="11.9" r=".6" fill="#8ae8de"/></svg>
<div class="a" style="left:816.1px;top:37.2px;width:2.5px;height:19.2px;background:#b7c9dc;border-radius:1.2px"></div>
<svg width="12" height="13" viewBox="0 0 12 13" style="left:827.1px;top:40.2px"><path d="M1 1 V9.6 L3.2 7.6 L4.8 11.2 L6.2 10.6 L4.6 7.2 H7.4Z" fill="#111"/><text x="5" y="11.8" font-family="Liberation Serif,serif" font-size="15" font-weight="bold" fill="#7a128c" stroke="#7a128c" stroke-width=".3">?</text></svg>
<div class="a" style="left:0;top:119.5px;width:193px;height:392px;background:repeating-linear-gradient(135deg,rgba(255,255,255,.15) 0,rgba(255,255,255,.15) .7px,rgba(255,255,255,0) .7px,rgba(255,255,255,0) 2.1px),linear-gradient(180deg,#c7d9e9 0,#cbdbea 20%,#d6e2ee 60%,#e1e9f2 100%)"></div>
<svg width="110" height="22" viewBox="0 0 110 22" style="left:0;top:119px"><defs><linearGradient id="gTab" x1="0" x2="0" y1="0" y2="1"><stop offset="0" stop-color="#a9c4df"/><stop offset="1" stop-color="#c3d6e9"/></linearGradient></defs><path d="M63 20 V5.5 Q63 3 65.5 3 H84 Q87 3 88.6 6 L96 20Z" fill="url(#gTab)" stroke="#cfdeed" stroke-width=".8"/><path d="M34 20 V5.5 Q34 3 36.5 3 H55 Q58 3 59.6 6 L67 20Z" fill="url(#gTab)" stroke="#cfdeed" stroke-width=".8"/><path d="M5 21 V5.5 Q5 2.6 7.8 2.6 H26 Q29 2.6 30.6 5.6 L38.4 21Z" fill="#edf2f9" stroke="#a9bccf" stroke-width=".8"/></svg>
<svg width="10" height="14" viewBox="0 0 10 14" style="left:14.8px;top:123.3px"><path d="M2.6 3.6 V10.4 M4.2 7 H6.4" stroke="#333" stroke-width=".7"/><rect x="1.1" y=".9" width="3" height="2.8" fill="#fff" stroke="#2a2a2a" stroke-width=".8"/><rect x="1.1" y="5.6" width="3" height="2.8" fill="#fff" stroke="#2a2a2a" stroke-width=".8"/><rect x="1.1" y="10.3" width="3" height="2.8" fill="#fff" stroke="#2a2a2a" stroke-width=".8"/><rect x="6.3" y="5.6" width="3" height="2.8" fill="#fff" stroke="#2a2a2a" stroke-width=".8"/></svg>
<svg width="14" height="14" viewBox="0 0 14 14" style="left:42.2px;top:123.1px"><path d="M1 1.2 h2.8 l.8 .9 h3.6 v5 h-7.2Z" fill="#f6ec6e" stroke="#4a3f10" stroke-width=".7" stroke-linejoin="round"/><path d="M1.5 3.1 h6.4" stroke="#fbf6b0" stroke-width=".7"/><path d="M3.4 4.4 h2.8 l.8 .9 h3.6 v5 h-7.2Z" fill="#f6ec6e" stroke="#4a3f10" stroke-width=".7" stroke-linejoin="round"/><path d="M3.9 6.3 h6.4" stroke="#fbf6b0" stroke-width=".7"/><path d="M5.8 7.6 h2.8 l.8 .9 h3.6 v5 h-7.2Z" fill="#f6ec6e" stroke="#4a3f10" stroke-width=".7" stroke-linejoin="round"/><path d="M6.3 9.5 h6.4" stroke="#fbf6b0" stroke-width=".7"/></svg>
<svg width="13" height="11" viewBox="0 0 13 11" style="left:71.9px;top:124.9px"><path d="M1 2 H4.4 L5.4 3 H12 V10.2 H1Z" fill="#f0dc58" stroke="#5a4a10" stroke-width=".8"/><path d="M6.5 4.6 L7.1 6 L8.6 6.2 L7.5 7.2 L7.8 8.7 L6.5 8 L5.2 8.7 L5.5 7.2 L4.4 6.2 L5.9 6Z" fill="#2020d8"/></svg>
<div class="a" style="left:-1px;top:139.3px;width:186.4px;height:375px;box-sizing:border-box;border:1px solid rgba(160,182,204,.0);border-top-color:#a9bccf;border-radius:0 3.5px 0 0;background:linear-gradient(90deg,rgba(255,255,255,.72) 0,rgba(255,255,255,.6) 55%,rgba(255,255,255,.38) 88%,rgba(255,255,255,.12) 97%,rgba(255,255,255,0) 100%)"></div>
<div class="a" style="left:184.6px;top:141.5px;width:1px;height:70px;background:linear-gradient(180deg,#aabdd0 0,rgba(170,189,208,0) 100%)"></div>
<div class="a" style="left:0;top:140.3px;width:183px;height:5px;background:linear-gradient(180deg,rgba(214,226,239,.9) 0,rgba(214,226,239,0) 100%)"></div>
<div class="t" style="left:17.9px;top:145.10px;font-size:8.6px;color:#22262e;font-weight:bold;transform:scaleX(0.9616);transform-origin:0 50%;">Model Tree</div>
<svg width="15" height="15" viewBox="0 0 15 15" style="left:129.5px;top:142.1px"><defs><linearGradient id="gHam" x1="0" x2="0" y1="0" y2="1"><stop offset="0" stop-color="#f4d048"/><stop offset=".5" stop-color="#f08a20"/><stop offset="1" stop-color="#d83010"/></linearGradient></defs><path d="M.9 6 Q.9 3.5 3.4 3.5 H8.8 V6.2 H3.4 Q2.6 6.2 2.4 7.2Z" fill="#dde1e4" stroke="#8a9198" stroke-width=".6"/><rect x="4.9" y="6.1" width="2.8" height="8.4" rx=".6" fill="url(#gHam)" stroke="#a06a20" stroke-width=".4"/><path d="M9.6 1.4 Q9.2 4 11.2 4.6 Q13.2 4 12.8 1.4" fill="none" stroke="#8a9198" stroke-width="1.3"/><rect x="9.9" y="4.6" width="2.5" height="8.6" rx=".5" fill="#2a5ad2" stroke="#1a3a9a" stroke-width=".4"/></svg>
<svg width="5" height="3.4" viewBox="0 0 5 3.4" style="left:147.1px;top:148.3px"><path d="M.3 .3 H4.7 L2.5 3.1Z" fill="#111"/></svg>
<svg width="12" height="14" viewBox="0 0 12 14" style="left:158.5px;top:142.1px"><defs><linearGradient id="gLst" x1="0" x2="0" y1="0" y2="1"><stop offset="0" stop-color="#fdfdfc"/><stop offset=".7" stop-color="#f4f6f6"/><stop offset="1" stop-color="#c8e6f6"/></linearGradient></defs><path d="M.8 .8 H8.2 L11.2 3.8 V13.2 H.8Z" fill="url(#gLst)" stroke="#8a8f92" stroke-width=".8" stroke-linejoin="round"/><path d="M8.2 .8 V3.8 H11.2" fill="#e8ecee" stroke="#8a8f92" stroke-width=".6"/><path d="M2.2 4.2 H3.4 M2.2 7.2 H3.4 M2.2 10.2 H3.4" stroke="#2a3a8a" stroke-width="1.1"/><path d="M4.6 4.2 H8.2 M4.6 7.2 H9.2 M4.6 10.2 H9.2" stroke="#8a9096" stroke-width=".8"/></svg>
<svg width="5" height="3.4" viewBox="0 0 5 3.4" style="left:174.3px;top:148.3px"><path d="M.3 .3 H4.7 L2.5 3.1Z" fill="#111"/></svg>
<div class="a" style="left:5px;top:161px;width:175px;height:345.6px;box-sizing:border-box;border:1px solid #8aa8c4;border-radius:2.5px;background:#fff"></div>
<div class="a" style="left:166px;top:162.5px;width:1px;height:343px;background:#e3e9ef"></div>
<div class="a" style="left:168px;top:174px;width:8.6px;height:167px;box-sizing:border-box;border:1px solid #9fb4ca;border-radius:4.3px;background:linear-gradient(90deg,#f4f8fc 0,#e3ecf5 45%,#cfdcea 100%)"></div>
<div class="a" style="left:171px;top:256.4px;width:2.6px;height:.7px;background:#8fa6be"></div><div class="a" style="left:171px;top:257.8px;width:2.6px;height:.7px;background:#8fa6be"></div><div class="a" style="left:171px;top:259.2px;width:2.6px;height:.7px;background:#8fa6be"></div>
<svg width="5.4" height="3.6" viewBox="0 0 5.4 3.6" style="left:169.9px;top:166.2px"><path d="M.3 3.3 H5.1 L2.7 .4Z" fill="#7fa0bc"/></svg>
<svg width="5.4" height="3.6" viewBox="0 0 5.4 3.6" style="left:169.9px;top:498.4px"><path d="M.3 .3 H5.1 L2.7 3.2Z" fill="#7fa0bc"/></svg>
<div class="a" style="left:185.8px;top:247.3px;width:6.6px;height:66px;box-sizing:border-box;border:1px solid rgba(235,242,249,.8);border-radius:2px"></div>
<div class="a" style="left:185.8px;top:320.3px;width:6.6px;height:64px;box-sizing:border-box;border:1px solid #9db0c4;border-radius:2px;background:rgba(220,232,243,.5)"></div>
<div class="a" style="left:189.3px;top:279.4px;width:1.8px;height:1.8px;border-radius:1px;background:#3a4452"></div>
<div class="a" style="left:189.3px;top:352.7px;width:1.8px;height:1.8px;border-radius:1px;background:#3a4452"></div>
<div class="a" style="left:14px;top:173px;width:1px;height:332px;background:#d4d8dc"></div>
<svg width="11" height="11" viewBox="0 0 11 11" style="left:8.1px;top:162.0px"><path d="M1.2 2.3 L2.4 1.2 H9.9 L8.3 2.3Z" fill="#fff" stroke="#8a9094" stroke-width=".5"/><path d="M8.3 2.3 L9.9 1.2 V8.5 L8.3 9.6Z" fill="#0b7c7a" stroke="#0a5a5a" stroke-width=".4"/><rect x="1.2" y="2.3" width="7.1" height="7.3" fill="#8df6f6" stroke="#8a9094" stroke-width=".6"/></svg>
<div class="t" style="left:21.6px;top:163.60px;font-size:8.6px;color:#15171a;transform:scaleX(0.8932);transform-origin:0 50%;-webkit-text-stroke:.22px #15171a;">15-06-2014DESIGN.PRT</div>
<div class="a" style="left:14px;top:179.9px;width:8px;height:1px;background:#d4d8dc"></div>
<svg width="11" height="11" viewBox="0 0 11 11" style="left:22.3px;top:174.6px"><rect x="0" y="0" width="11" height="11" fill="#e6e6e2"/><path d="M1.6 9 L4 2.4 H9.6 L7.2 9Z" fill="none" stroke="#a9a68e" stroke-width=".9"/></svg>
<div class="t" style="left:35.8px;top:176.25px;font-size:8.6px;color:#b3b6ba;transform:scaleX(0.8560);transform-origin:0 50%;">RIGHT</div>
<div class="a" style="left:14px;top:192.6px;width:8px;height:1px;background:#d4d8dc"></div>
<svg width="11" height="11" viewBox="0 0 11 11" style="left:22.3px;top:187.3px"><rect x="0" y="0" width="11" height="11" fill="#e6e6e2"/><path d="M1.6 9 L4 2.4 H9.6 L7.2 9Z" fill="none" stroke="#a9a68e" stroke-width=".9"/></svg>
<div class="t" style="left:35.8px;top:188.89px;font-size:8.6px;color:#b3b6ba;transform:scaleX(0.8845);transform-origin:0 50%;">TOP</div>
<div class="a" style="left:14px;top:205.2px;width:8px;height:1px;background:#d4d8dc"></div>
<svg width="11" height="11" viewBox="0 0 11 11" style="left:22.3px;top:199.9px"><rect x="0" y="0" width="11" height="11" fill="#e6e6e2"/><path d="M1.6 9 L4 2.4 H9.6 L7.2 9Z" fill="none" stroke="#a9a68e" stroke-width=".9"/></svg>
<div class="t" style="left:35.8px;top:201.54px;font-size:8.6px;color:#b3b6ba;transform:scaleX(0.8846);transform-origin:0 50%;">FRONT</div>
<div class="a" style="left:14px;top:217.9px;width:8px;height:1px;background:#d4d8dc"></div>
<svg width="11" height="11" viewBox="0 0 11 11" style="left:22.3px;top:212.6px"><rect x="0" y="0" width="11" height="11" fill="#e6e6e2"/><path d="M2 1.6 L8.6 9.6 M9 2 L2 9 M1 5.6 H10" stroke="#b0a890" stroke-width=".8"/></svg>
<div class="t" style="left:35.8px;top:214.19px;font-size:8.6px;color:#b3b6ba;transform:scaleX(0.8136);transform-origin:0 50%;">PRT_CSYS_DEF</div>
<div class="a" style="left:14px;top:230.5px;width:8px;height:1px;background:#d4d8dc"></div>
<svg width="11" height="11" viewBox="0 0 11 11" style="left:22.3px;top:225.2px"><rect x="0" y="0" width="11" height="11" fill="#e6e6e2"/><path d="M1.2 8.8 Q3 2.6 5.4 2.8 Q7.8 3 9.8 8.8" fill="none" stroke="#a9a68e" stroke-width=".9"/></svg>
<div class="t" style="left:35.8px;top:226.84px;font-size:8.6px;color:#b3b6ba;transform:scaleX(0.8965);transform-origin:0 50%;">Sketch 1</div>
<div class="a" style="left:14px;top:243.2px;width:8px;height:1px;background:#d4d8dc"></div>
<svg width="11" height="11" viewBox="0 0 11 11" style="left:22.3px;top:237.9px"><rect x="1" y="5.9" width="4.4" height="4.4" fill="#86eef0" stroke="#2a4a5a" stroke-width=".7"/><path d="M5.4 5.9 L9.6 1.8 M3 5.9 L6.4 2.6 M5.4 8.4 L8.2 5.6" stroke="#3a3a3a" stroke-width=".6"/><path d="M6.6 1 H10.4 V4.8" fill="none" stroke="#111" stroke-width=".9"/></svg>
<div class="a" style="left:10.6px;top:240.0px;width:7px;height:7px;box-sizing:border-box;border:.8px solid #b9c3ce;border-radius:1.6px;background:#fff"></div>
<div class="a" style="left:12.3px;top:243.0px;width:3.6px;height:.9px;background:#2a3a5a"></div><div class="a" style="left:13.65px;top:241.7px;width:.9px;height:3.6px;background:#2a3a5a"></div>
<div class="t" style="left:35.8px;top:239.49px;font-size:8.6px;color:#15171a;transform:scaleX(0.8965);transform-origin:0 50%;-webkit-text-stroke:.22px #15171a;">Extrude 1</div>
<div class="a" style="left:14px;top:255.8px;width:8px;height:1px;background:#d4d8dc"></div>
<svg width="11" height="11" viewBox="0 0 11 11" style="left:22.3px;top:250.5px"><path d="M.8 4.8 L3 2.8 L8 8.2 V10.6 H.8Z" fill="#f0efe4"/><path d="M8 8.2 L10.4 5.8 V8.2 L8 10.6Z" fill="#d4d3c6"/><path d="M3 2.8 L5.6 1 L10.4 5.8 L8 8.2Z" fill="#80f0f0" stroke="#2a5a6a" stroke-width=".7" stroke-linejoin="round"/></svg>
<div class="t" style="left:35.8px;top:252.13px;font-size:8.6px;color:#15171a;transform:scaleX(0.9490);transform-origin:0 50%;-webkit-text-stroke:.22px #15171a;">Chamfer 1</div>
<div class="a" style="left:14px;top:268.5px;width:8px;height:1px;background:#d4d8dc"></div>
<svg width="11" height="11" viewBox="0 0 11 11" style="left:22.3px;top:263.2px"><rect x="0" y="0" width="11" height="11" fill="#e6e6e2"/><path d="M1.2 8.8 Q3 2.6 5.4 2.8 Q7.8 3 9.8 8.8" fill="none" stroke="#a9a68e" stroke-width=".9"/></svg>
<div class="t" style="left:35.8px;top:264.78px;font-size:8.6px;color:#b3b6ba;transform:scaleX(0.8965);transform-origin:0 50%;">Sketch 2</div>
<div class="a" style="left:14px;top:281.1px;width:8px;height:1px;background:#d4d8dc"></div>
<svg width="11" height="11" viewBox="0 0 11 11" style="left:22.3px;top:275.8px"><rect x="1" y="5.9" width="4.4" height="4.4" fill="#86eef0" stroke="#2a4a5a" stroke-width=".7"/><path d="M5.4 5.9 L9.6 1.8 M3 5.9 L6.4 2.6 M5.4 8.4 L8.2 5.6" stroke="#3a3a3a" stroke-width=".6"/><path d="M6.6 1 H10.4 V4.8" fill="none" stroke="#111" stroke-width=".9"/></svg>
<div class="a" style="left:10.6px;top:277.9px;width:7px;height:7px;box-sizing:border-box;border:.8px solid #b9c3ce;border-radius:1.6px;background:#fff"></div>
<div class="a" style="left:12.3px;top:281.0px;width:3.6px;height:.9px;background:#2a3a5a"></div><div class="a" style="left:13.65px;top:279.6px;width:.9px;height:3.6px;background:#2a3a5a"></div>
<div class="t" style="left:35.8px;top:277.43px;font-size:8.6px;color:#15171a;transform:scaleX(0.8965);transform-origin:0 50%;-webkit-text-stroke:.22px #15171a;">Extrude 2</div>
<div class="a" style="left:14px;top:293.8px;width:8px;height:1px;background:#d4d8dc"></div>
<svg width="11" height="11" viewBox="0 0 11 11" style="left:22.3px;top:288.5px"><path d="M.8 4.8 L3 2.8 L8 8.2 V10.6 H.8Z" fill="#f0efe4"/><path d="M8 8.2 L10.4 5.8 V8.2 L8 10.6Z" fill="#d4d3c6"/><path d="M3 2.8 L5.6 1 L10.4 5.8 L8 8.2Z" fill="#80f0f0" stroke="#2a5a6a" stroke-width=".7" stroke-linejoin="round"/></svg>
<div class="t" style="left:35.8px;top:290.08px;font-size:8.6px;color:#15171a;transform:scaleX(0.9490);transform-origin:0 50%;-webkit-text-stroke:.22px #15171a;">Chamfer 2</div>
<div class="a" style="left:14px;top:306.4px;width:8px;height:1px;background:#d4d8dc"></div>
<svg width="11" height="11" viewBox="0 0 11 11" style="left:22.3px;top:301.1px"><rect x="0" y="0" width="11" height="11" fill="#e6e6e2"/><path d="M1.2 8.8 Q3 2.6 5.4 2.8 Q7.8 3 9.8 8.8" fill="none" stroke="#a9a68e" stroke-width=".9"/></svg>
<div class="t" style="left:35.8px;top:302.73px;font-size:8.6px;color:#b3b6ba;transform:scaleX(0.8965);transform-origin:0 50%;">Sketch 3</div>
<div class="a" style="left:14px;top:319.1px;width:8px;height:1px;background:#d4d8dc"></div>
<svg width="11" height="11" viewBox="0 0 11 11" style="left:22.3px;top:313.8px"><rect x="1" y="5.9" width="4.4" height="4.4" fill="#86eef0" stroke="#2a4a5a" stroke-width=".7"/><path d="M5.4 5.9 L9.6 1.8 M3 5.9 L6.4 2.6 M5.4 8.4 L8.2 5.6" stroke="#3a3a3a" stroke-width=".6"/><path d="M6.6 1 H10.4 V4.8" fill="none" stroke="#111" stroke-width=".9"/></svg>
<div class="a" style="left:10.6px;top:315.9px;width:7px;height:7px;box-sizing:border-box;border:.8px solid #b9c3ce;border-radius:1.6px;background:#fff"></div>
<div class="a" style="left:12.3px;top:318.9px;width:3.6px;height:.9px;background:#2a3a5a"></div><div class="a" style="left:13.65px;top:317.6px;width:.9px;height:3.6px;background:#2a3a5a"></div>
<div class="t" style="left:35.8px;top:315.37px;font-size:8.6px;color:#15171a;transform:scaleX(0.8965);transform-origin:0 50%;-webkit-text-stroke:.22px #15171a;">Extrude 3</div>
<div class="a" style="left:14px;top:331.7px;width:8px;height:1px;background:#d4d8dc"></div>
<svg width="11" height="11" viewBox="0 0 11 11" style="left:22.3px;top:326.4px"><path d="M2.4 10.4 L8.4 .8" stroke="#9a4a1c" stroke-width="1.1" stroke-dasharray="3.4 1.2"/></svg>
<div class="t" style="left:35.8px;top:328.02px;font-size:8.6px;color:#15171a;transform:scaleX(0.8561);transform-origin:0 50%;-webkit-text-stroke:.22px #15171a;">A_3</div>
<div class="a" style="left:14px;top:344.4px;width:8px;height:1px;background:#d4d8dc"></div>
<svg width="11" height="11" viewBox="0 0 11 11" style="left:22.3px;top:339.1px"><rect x="0" y="0" width="11" height="11" fill="#e6e6e2"/><path d="M1.2 8.8 Q3 2.6 5.4 2.8 Q7.8 3 9.8 8.8" fill="none" stroke="#a9a68e" stroke-width=".9"/></svg>
<div class="t" style="left:35.8px;top:340.67px;font-size:8.6px;color:#b3b6ba;transform:scaleX(0.8965);transform-origin:0 50%;">Sketch 4</div>
<div class="a" style="left:14px;top:357.0px;width:8px;height:1px;background:#d4d8dc"></div>
<svg width="11" height="11" viewBox="0 0 11 11" style="left:22.3px;top:351.7px"><rect x="1" y="5.9" width="4.4" height="4.4" fill="#86eef0" stroke="#2a4a5a" stroke-width=".7"/><path d="M5.4 5.9 L9.6 1.8 M3 5.9 L6.4 2.6 M5.4 8.4 L8.2 5.6" stroke="#3a3a3a" stroke-width=".6"/><path d="M6.6 1 H10.4 V4.8" fill="none" stroke="#111" stroke-width=".9"/></svg>
<div class="a" style="left:10.6px;top:353.8px;width:7px;height:7px;box-sizing:border-box;border:.8px solid #b9c3ce;border-radius:1.6px;background:#fff"></div>
<div class="a" style="left:12.3px;top:356.9px;width:3.6px;height:.9px;background:#2a3a5a"></div><div class="a" style="left:13.65px;top:355.5px;width:.9px;height:3.6px;background:#2a3a5a"></div>
<div class="t" style="left:35.8px;top:353.32px;font-size:8.6px;color:#15171a;transform:scaleX(0.8965);transform-origin:0 50%;-webkit-text-stroke:.22px #15171a;">Extrude 4</div>
<div class="a" style="left:14px;top:369.7px;width:8px;height:1px;background:#d4d8dc"></div>
<svg width="11" height="11" viewBox="0 0 11 11" style="left:22.3px;top:364.4px"><rect x="0" y="0" width="11" height="11" fill="#e6e6e2"/><path d="M1.2 8.8 Q3 2.6 5.4 2.8 Q7.8 3 9.8 8.8" fill="none" stroke="#a9a68e" stroke-width=".9"/></svg>
<div class="t" style="left:35.8px;top:365.97px;font-size:8.6px;color:#b3b6ba;transform:scaleX(0.8965);transform-origin:0 50%;">Sketch 5</div>
<div class="a" style="left:14px;top:382.3px;width:8px;height:1px;background:#d4d8dc"></div>
<svg width="11" height="11" viewBox="0 0 11 11" style="left:22.3px;top:377.0px"><rect x="1" y="5.9" width="4.4" height="4.4" fill="#86eef0" stroke="#2a4a5a" stroke-width=".7"/><path d="M5.4 5.9 L9.6 1.8 M3 5.9 L6.4 2.6 M5.4 8.4 L8.2 5.6" stroke="#3a3a3a" stroke-width=".6"/><path d="M6.6 1 H10.4 V4.8" fill="none" stroke="#111" stroke-width=".9"/></svg>
<div class="a" style="left:10.6px;top:379.1px;width:7px;height:7px;box-sizing:border-box;border:.8px solid #b9c3ce;border-radius:1.6px;background:#fff"></div>
<div class="a" style="left:12.3px;top:382.2px;width:3.6px;height:.9px;background:#2a3a5a"></div><div class="a" style="left:13.65px;top:380.8px;width:.9px;height:3.6px;background:#2a3a5a"></div>
<div class="t" style="left:35.8px;top:378.61px;font-size:8.6px;color:#15171a;transform:scaleX(0.8965);transform-origin:0 50%;-webkit-text-stroke:.22px #15171a;">Extrude 5</div>
<div class="a" style="left:14px;top:395.0px;width:8px;height:1px;background:#d4d8dc"></div>
<svg width="11" height="11" viewBox="0 0 11 11" style="left:22.3px;top:389.7px"><path d="M1.6 2.6 Q7.6 1.2 9.6 7 L8.4 9.8 Q6.8 5 1.8 5.4Z" fill="#7fe0e6" stroke="#3a6a7a" stroke-width=".7" stroke-linejoin="round"/><path d="M8.4 9.8 L5.6 9.6 Q5 6.6 1.8 5.4" fill="#e8f2f4" stroke="#888" stroke-width=".5"/></svg>
<div class="t" style="left:35.8px;top:391.26px;font-size:8.6px;color:#15171a;transform:scaleX(0.9503);transform-origin:0 50%;-webkit-text-stroke:.22px #15171a;">Round 1</div>
<div class="a" style="left:14px;top:407.6px;width:8px;height:1px;background:#d4d8dc"></div>
<svg width="11" height="11" viewBox="0 0 11 11" style="left:22.3px;top:402.3px"><path d="M.8 4.8 L3 2.8 L8 8.2 V10.6 H.8Z" fill="#f0efe4"/><path d="M8 8.2 L10.4 5.8 V8.2 L8 10.6Z" fill="#d4d3c6"/><path d="M3 2.8 L5.6 1 L10.4 5.8 L8 8.2Z" fill="#80f0f0" stroke="#2a5a6a" stroke-width=".7" stroke-linejoin="round"/></svg>
<div class="t" style="left:35.8px;top:403.91px;font-size:8.6px;color:#15171a;transform:scaleX(0.9490);transform-origin:0 50%;-webkit-text-stroke:.22px #15171a;">Chamfer 3</div>
<div class="a" style="left:14px;top:420.3px;width:8px;height:1px;background:#d4d8dc"></div>
<svg width="11" height="11" viewBox="0 0 11 11" style="left:22.3px;top:415.0px"><rect x="0" y="0" width="11" height="11" fill="#e6e6e2"/><path d="M1.2 8.8 Q3 2.6 5.4 2.8 Q7.8 3 9.8 8.8" fill="none" stroke="#a9a68e" stroke-width=".9"/></svg>
<div class="t" style="left:35.8px;top:416.56px;font-size:8.6px;color:#b3b6ba;transform:scaleX(0.8965);transform-origin:0 50%;">Sketch 6</div>
<div class="a" style="left:14px;top:432.9px;width:8px;height:1px;background:#d4d8dc"></div>
<svg width="11" height="11" viewBox="0 0 11 11" style="left:22.3px;top:427.6px"><rect x="1" y="5.9" width="4.4" height="4.4" fill="#86eef0" stroke="#2a4a5a" stroke-width=".7"/><path d="M5.4 5.9 L9.6 1.8 M3 5.9 L6.4 2.6 M5.4 8.4 L8.2 5.6" stroke="#3a3a3a" stroke-width=".6"/><path d="M6.6 1 H10.4 V4.8" fill="none" stroke="#111" stroke-width=".9"/></svg>
<div class="a" style="left:10.6px;top:429.7px;width:7px;height:7px;box-sizing:border-box;border:.8px solid #b9c3ce;border-radius:1.6px;background:#fff"></div>
<div class="a" style="left:12.3px;top:432.8px;width:3.6px;height:.9px;background:#2a3a5a"></div><div class="a" style="left:13.65px;top:431.4px;width:.9px;height:3.6px;background:#2a3a5a"></div>
<div class="t" style="left:35.8px;top:429.21px;font-size:8.6px;color:#15171a;transform:scaleX(0.8965);transform-origin:0 50%;-webkit-text-stroke:.22px #15171a;">Extrude 6</div>
<div class="a" style="left:14px;top:445.6px;width:8px;height:1px;background:#d4d8dc"></div>
<svg width="11" height="11" viewBox="0 0 11 11" style="left:22.3px;top:440.3px"><path d="M1.2 9 L3.8 2.6 H10 L7.4 9Z" fill="none" stroke="#8a3c14" stroke-width="1" stroke-linejoin="round"/></svg>
<div class="t" style="left:35.8px;top:441.85px;font-size:8.6px;color:#15171a;transform:scaleX(0.9397);transform-origin:0 50%;-webkit-text-stroke:.22px #15171a;">DTM1</div>
<div class="a" style="left:14px;top:458.2px;width:8px;height:1px;background:#d4d8dc"></div>
<svg width="11" height="11" viewBox="0 0 11 11" style="left:22.3px;top:452.9px"><rect x="0" y="0" width="11" height="11" fill="#e6e6e2"/><path d="M1.2 8.8 Q3 2.6 5.4 2.8 Q7.8 3 9.8 8.8" fill="none" stroke="#a9a68e" stroke-width=".9"/></svg>
<div class="t" style="left:35.8px;top:454.50px;font-size:8.6px;color:#b3b6ba;transform:scaleX(0.8965);transform-origin:0 50%;">Sketch 7</div>
<div class="a" style="left:14px;top:470.9px;width:8px;height:1px;background:#d4d8dc"></div>
<svg width="11" height="11" viewBox="0 0 11 11" style="left:22.3px;top:465.6px"><rect x="1" y="5.9" width="4.4" height="4.4" fill="#86eef0" stroke="#2a4a5a" stroke-width=".7"/><path d="M5.4 5.9 L9.6 1.8 M3 5.9 L6.4 2.6 M5.4 8.4 L8.2 5.6" stroke="#3a3a3a" stroke-width=".6"/><path d="M6.6 1 H10.4 V4.8" fill="none" stroke="#111" stroke-width=".9"/></svg>
<div class="a" style="left:10.6px;top:467.7px;width:7px;height:7px;box-sizing:border-box;border:.8px solid #b9c3ce;border-radius:1.6px;background:#fff"></div>
<div class="a" style="left:12.3px;top:470.7px;width:3.6px;height:.9px;background:#2a3a5a"></div><div class="a" style="left:13.65px;top:469.4px;width:.9px;height:3.6px;background:#2a3a5a"></div>
<div class="t" style="left:35.8px;top:467.15px;font-size:8.6px;color:#15171a;transform:scaleX(0.8965);transform-origin:0 50%;-webkit-text-stroke:.22px #15171a;">Extrude 7</div>
<div class="a" style="left:14px;top:483.5px;width:8px;height:1px;background:#d4d8dc"></div>
<svg width="11" height="11" viewBox="0 0 11 11" style="left:22.3px;top:478.2px"><rect x="0" y="0" width="11" height="11" fill="#e6e6e2"/><path d="M1.2 8.8 Q3 2.6 5.4 2.8 Q7.8 3 9.8 8.8" fill="none" stroke="#a9a68e" stroke-width=".9"/></svg>
<div class="t" style="left:35.8px;top:479.80px;font-size:8.6px;color:#b3b6ba;transform:scaleX(0.8965);transform-origin:0 50%;">Sketch 8</div>
<div class="a" style="left:14px;top:496.1px;width:8px;height:1px;background:#d4d8dc"></div>
<svg width="11" height="11" viewBox="0 0 11 11" style="left:22.3px;top:490.8px"><rect x="1" y="5.9" width="4.4" height="4.4" fill="#86eef0" stroke="#2a4a5a" stroke-width=".7"/><path d="M5.4 5.9 L9.6 1.8 M3 5.9 L6.4 2.6 M5.4 8.4 L8.2 5.6" stroke="#3a3a3a" stroke-width=".6"/><path d="M6.6 1 H10.4 V4.8" fill="none" stroke="#111" stroke-width=".9"/></svg>
<div class="a" style="left:10.6px;top:492.9px;width:7px;height:7px;box-sizing:border-box;border:.8px solid #b9c3ce;border-radius:1.6px;background:#fff"></div>
<div class="a" style="left:12.3px;top:496.0px;width:3.6px;height:.9px;background:#2a3a5a"></div><div class="a" style="left:13.65px;top:494.6px;width:.9px;height:3.6px;background:#2a3a5a"></div>
<div class="t" style="left:35.8px;top:492.45px;font-size:8.6px;color:#15171a;transform:scaleX(0.8965);transform-origin:0 50%;-webkit-text-stroke:.22px #15171a;">Extrude 8</div>
<div class="a" style="left:22.3px;top:503.6px;width:11px;height:1.6px;background:#e0e0dc"></div>
<div class="a" style="left:891.6px;top:119px;width:68.4px;height:393px;background:#dde9f3"></div>
<div class="a" style="left:891.6px;top:119px;width:.9px;height:393px;background:#e9f0f8"></div>
<div class="a" style="left:892.6px;top:122.3px;width:47px;height:2.2px;background:#bfd2e5;border-radius:1px"></div>
<div class="a" style="left:941.6px;top:122.3px;width:19px;height:2.2px;background:#bfd2e5;border-radius:1px"></div>
<svg width="14" height="14" viewBox="0 0 14 14" style="left:894.6px;top:132.6px"><path d="M1.4 1.6 V6.6 M12.6 1.6 V6.6 M2.4 4.2 H11.6" stroke="#333" stroke-width=".9"/><path d="M4.6 2.6 L2.2 4.2 L4.6 5.8 M9.4 2.6 L11.8 4.2 L9.4 5.8" fill="none" stroke="#333" stroke-width=".8"/><rect x="1" y="8.6" width="12" height="4" fill="#f1f1ee" stroke="#555" stroke-width=".8"/><path d="M3.4 10.4 V12 M5.8 10.4 V12 M8.2 10.4 V12 M10.6 10.4 V12" stroke="#555" stroke-width=".6"/></svg>
<svg width="14" height="14" viewBox="0 0 14 14" style="left:894.6px;top:152.0px"><path d="M2 7.4 L9.6 1 M2 7.4 H11 M2 7.4 L7 2.2" fill="none" stroke="#333" stroke-width=".9"/><path d="M2 7.4 L8.4 2 L11 7.4Z" fill="none" stroke="#333" stroke-width=".7"/><rect x="1" y="8.6" width="12" height="4" fill="#f1f1ee" stroke="#555" stroke-width=".8"/><path d="M3.4 10.4 V12 M5.8 10.4 V12 M8.2 10.4 V12 M10.6 10.4 V12" stroke="#555" stroke-width=".6"/></svg>
<svg width="14" height="14" viewBox="0 0 14 14" style="left:894.6px;top:171.6px"><rect x="1.4" y="1" width="11.2" height="6.4" fill="#fff" stroke="#222" stroke-width="1.1"/><path d="M7 1 V7.4 M1.4 4.2 H12.6" stroke="#222" stroke-width="1.1"/><rect x="1" y="8.6" width="12" height="4" fill="#f1f1ee" stroke="#555" stroke-width=".8"/><path d="M3.4 10.4 V12 M5.8 10.4 V12 M8.2 10.4 V12 M10.6 10.4 V12" stroke="#555" stroke-width=".6"/></svg>
<svg width="14" height="14" viewBox="0 0 14 14" style="left:894.6px;top:191.0px"><circle cx="7" cy="4.2" r="3.3" fill="#fff" stroke="#222" stroke-width="1"/><path d="M2.6 4.2 H11.4" stroke="#222" stroke-width="1"/><rect x="1" y="8.6" width="12" height="4" fill="#f1f1ee" stroke="#555" stroke-width=".8"/><path d="M3.4 10.4 V12 M5.8 10.4 V12 M8.2 10.4 V12 M10.6 10.4 V12" stroke="#555" stroke-width=".6"/></svg>
<svg width="14" height="14" viewBox="0 0 14 14" style="left:894.6px;top:210.6px"><path d="M2 8 Q1 3 6 2.6 Q10 2.4 12.6 1.2" fill="none" stroke="#e030c8" stroke-width="1.2"/><path d="M3 8.4 Q3.6 5 7 4.6 Q9.6 4.4 10.6 3.6" fill="none" stroke="#3848c8" stroke-width=".9"/><path d="M2 8 L1 5 M3.6 6 L2 3.4 M5.6 4.6 L4.6 2 M8 4.4 L7.8 1.6" stroke="#777" stroke-width=".6"/><rect x="1" y="8.6" width="12" height="4" fill="#f1f1ee" stroke="#555" stroke-width=".8"/><path d="M3.4 10.4 V12 M5.8 10.4 V12 M8.2 10.4 V12 M10.6 10.4 V12" stroke="#555" stroke-width=".6"/></svg>
<svg width="14" height="14" viewBox="0 0 14 14" style="left:894.6px;top:230.0px"><path d="M1.2 8 Q1.2 1 7 1 Q12.8 1 12.8 8Z" fill="#c9ccd0" stroke="#555" stroke-width=".8"/><path d="M3 7 Q3.6 3 7 3 Q10.4 3 11 7 M5 7.4 Q5.4 4.8 7 4.8 Q8.6 4.8 9 7.4" fill="none" stroke="#777" stroke-width=".7"/><rect x="1" y="8.6" width="12" height="4" fill="#f1f1ee" stroke="#555" stroke-width=".8"/><path d="M3.4 10.4 V12 M5.8 10.4 V12 M8.2 10.4 V12 M10.6 10.4 V12" stroke="#555" stroke-width=".6"/></svg>
<svg width="14" height="14" viewBox="0 0 14 14" style="left:894.6px;top:249.4px"><path d="M1.4 2.6 Q4 .6 7 2.6 T12.6 2.6 M1.4 5.4 Q4 3.4 7 5.4 T12.6 5.4 M1.4 8 Q4 6 7 8 T12.6 8" fill="none" stroke="#e030c8" stroke-width="1"/><rect x="1" y="8.6" width="12" height="4" fill="#f1f1ee" stroke="#555" stroke-width=".8"/><path d="M3.4 10.4 V12 M5.8 10.4 V12 M8.2 10.4 V12 M10.6 10.4 V12" stroke="#555" stroke-width=".6"/></svg>
<svg width="14" height="14" viewBox="0 0 14 14" style="left:894.6px;top:268.8px"><defs><linearGradient id="gRb" x1="0" x2="1"><stop offset="0" stop-color="#2a38e0"/><stop offset=".3" stop-color="#28d0e0"/><stop offset=".5" stop-color="#30d840"/><stop offset=".7" stop-color="#f0e030"/><stop offset="1" stop-color="#e82828"/></linearGradient></defs><path d="M1.2 9 Q1.2 1 7 1 Q12.8 1 12.8 9Z" fill="url(#gRb)" stroke="#333" stroke-width=".7"/><path d="M4 9 Q4.4 5 7 5 Q9.6 5 10 9Z" fill="#e83030" opacity=".8"/><rect x="1" y="8.6" width="12" height="4" fill="#f1f1ee" stroke="#555" stroke-width=".8"/><path d="M3.4 10.4 V12 M5.8 10.4 V12 M8.2 10.4 V12 M10.6 10.4 V12" stroke="#555" stroke-width=".6"/></svg>
<svg width="14" height="14" viewBox="0 0 14 14" style="left:894.6px;top:288.2px"><path d="M4 8.6 L5.4 1.4 H8.6 L10 8.6Z" fill="#e878d8" stroke="#555" stroke-width=".7"/><path d="M8.6 1.4 L11.4 3.4 L10 8.6Z" fill="#4868d8" stroke="#555" stroke-width=".6"/><path d="M3.6 .8 L5.4 3" stroke="#333" stroke-width=".7"/><rect x="1" y="8.6" width="12" height="4" fill="#f1f1ee" stroke="#555" stroke-width=".8"/><path d="M3.4 10.4 V12 M5.8 10.4 V12 M8.2 10.4 V12 M10.6 10.4 V12" stroke="#555" stroke-width=".6"/></svg>
<svg width="14" height="14" viewBox="0 0 14 14" style="left:894.6px;top:309.4px"><path d="M1.6 3 Q7 -1 12.4 3 M1.6 5.2 Q7 1.2 12.4 5.2 M1.6 7.4 Q7 3.4 12.4 7.4 M1.6 9.4 Q7 5.6 12.4 9.4" fill="none" stroke="#c838b0" stroke-width="1"/><rect x="1" y="8.6" width="12" height="4" fill="#f1f1ee" stroke="#555" stroke-width=".8"/><path d="M3.4 10.4 V12 M5.8 10.4 V12 M8.2 10.4 V12 M10.6 10.4 V12" stroke="#555" stroke-width=".6"/></svg>
<svg width="15" height="11" viewBox="0 0 15 11" style="left:894.1px;top:332.3px"><rect x=".6" y=".8" width="11" height="3.2" fill="#f1f1ee" stroke="#555" stroke-width=".7"/><path d="M2.6 2.4 V4 M4.8 2.4 V4 M7 2.4 V4 M9.2 2.4 V4" stroke="#555" stroke-width=".6"/><rect x="7.6" y="4.8" width="6" height="5.2" fill="#8ae6ea" stroke="#2a4a5a" stroke-width=".8"/><path d="M7.6 6.4 H13.6" stroke="#2a4a5a" stroke-width=".6"/></svg>
<svg width="15" height="12" viewBox="0 0 15 12" style="left:894.1px;top:351.0px"><rect x=".6" y=".8" width="11" height="3.2" fill="#f1f1ee" stroke="#555" stroke-width=".7"/><path d="M2.6 2.4 V4 M4.8 2.4 V4 M7 2.4 V4 M9.2 2.4 V4" stroke="#555" stroke-width=".6"/><ellipse cx="9.6" cy="7.8" rx="3" ry="2" fill="#444" stroke="#111" stroke-width=".6"/><path d="M5.6 4.6 L13.6 11.4" stroke="#e02020" stroke-width="1.2"/></svg>
<svg width="14" height="12" viewBox="0 0 14 12" style="left:914.0px;top:133.6px"><rect x="1" y="1" width="12" height="10" fill="none" stroke="#3a5ae0" stroke-width=".8" stroke-dasharray=".9 1.1"/><path d="M1.6 7.4 Q4.4 .6 7 5.6 T12.4 6.6" fill="none" stroke="#1a3ad8" stroke-width="1.3"/></svg>
<svg width="14" height="11" viewBox="0 0 14 11" style="left:914.0px;top:153.5px"><path d="M1.4 9.4 L4.6 1.6 H12.6 L9.4 9.4Z" fill="none" stroke="#9a4a1c" stroke-width="1.2" stroke-linejoin="round"/></svg>
<svg width="9" height="14" viewBox="0 0 9 14" style="left:916.5px;top:171.6px"><path d="M1.6 13 L7.4 1" stroke="#9a4a1c" stroke-width="1.6" stroke-dasharray="4.2 1.5"/></svg>
<svg width="15" height="10" viewBox="0 0 15 10" style="left:913.5px;top:193.0px"><path d="M1 8 Q3.4 1.4 6.6 5.4 T14 2.4" fill="none" stroke="#9a4a1c" stroke-width="1.3"/></svg>
<svg width="13" height="12" viewBox="0 0 13 12" style="left:914.5px;top:211.8px"><path d="M4.6 0.6 l3.2 3.2 m0 -3.2 l-3.2 3.2 M0.8 7.6 l3.2 3.2 m0 -3.2 l-3.2 3.2 M8.4 6.4 l3.2 3.2 m0 -3.2 l-3.2 3.2" stroke="#b4500e" stroke-width="1.15" fill="none"/></svg>
<svg width="3.4" height="5" viewBox="0 0 3.4 5" style="left:933.3px;top:215.1px"><path d="M.4 .4 V4.6 L3 2.5Z" fill="#222"/></svg>
<svg width="14" height="14" viewBox="0 0 14 14" style="left:914.0px;top:230.0px"><path d="M3.4 1.6 L9.6 12.4 M11.4 2.6 L2 10.6 M1.4 6.6 H12" stroke="#b85a1c" stroke-width="1"/><path d="M1 .8 L2.6 2.4 M2.6 .8 L1 2.4 M11.6 6 L13.2 7.6 M13.2 6 L11.6 7.6 M1 11.4 H2.8 L1 13.2 H2.8" stroke="#555" stroke-width=".6" fill="none"/></svg>
<svg width="14" height="14" viewBox="0 0 14 14" style="left:914.0px;top:249.4px"><path d="M5.4 0.6 l3.2 3.2 m0 -3.2 l-3.2 3.2 M1.8 5.4 l3.2 3.2 m0 -3.2 l-3.2 3.2 M8.8 5 l3.2 3.2 m0 -3.2 l-3.2 3.2" stroke="#b4500e" stroke-width="1.1" fill="none"/><rect x="1" y="9" width="12" height="4" fill="#f4e87a" stroke="#6a5a10" stroke-width=".8"/><path d="M3.4 10.8 V12.4 M5.8 10.8 V12.4 M8.2 10.8 V12.4 M10.6 10.8 V12.4" stroke="#6a5a10" stroke-width=".6"/></svg>
<svg width="13" height="14" viewBox="0 0 13 14" style="left:914.5px;top:268.8px"><ellipse cx="9" cy="3.8" rx="3" ry="1.9" transform="rotate(-45 9 3.8)" fill="none" stroke="#a8521c" stroke-width="1.3"/><ellipse cx="6.4" cy="7" rx="3" ry="1.9" transform="rotate(-45 6.4 7)" fill="none" stroke="#a8521c" stroke-width="1.3"/><ellipse cx="3.8" cy="10.2" rx="3" ry="1.9" transform="rotate(-45 3.8 10.2)" fill="none" stroke="#a8521c" stroke-width="1.3"/></svg>
<div class="a" style="left:911.5px;top:290.2px;width:27.0px;height:2px;background:#bfd2e5;border-radius:1px"></div>
<svg width="15" height="12" viewBox="0 0 15 12" style="left:913.5px;top:299.6px"><rect x="1" y="1" width="8" height="5" fill="#f6ee8a" stroke="#7a6d14" stroke-width=".9"/><path d="M8.6 6.4 H13.4 L10.4 11.2 M9.2 9.6 L11 11.4 M11.4 9.4 L9.4 11.6" fill="none" stroke="#333" stroke-width=".9"/></svg>
<svg width="15" height="12" viewBox="0 0 15 12" style="left:913.5px;top:318.8px"><rect x="1" y="1" width="8" height="5" fill="#f6ee8a" stroke="#7a6d14" stroke-width=".9"/><circle cx="5" cy="5" r="2.4" fill="none" stroke="#555" stroke-width=".8"/><path d="M8.6 6.4 H13.4 L10.4 11.2 M9.2 9.6 L11 11.4 M11.4 9.4 L9.4 11.6" fill="none" stroke="#333" stroke-width=".9"/></svg>
<svg width="15" height="12" viewBox="0 0 15 12" style="left:913.5px;top:338.6px"><rect x="1" y="1" width="8" height="5" fill="#e6e9ec" stroke="#a4a9af" stroke-width=".9"/><path d="M8.6 6.4 H13.4 L10.4 11.2 M9.2 9.6 L11 11.4 M11.4 9.4 L9.4 11.6" fill="none" stroke="#a4a9af" stroke-width=".9"/></svg>
<div class="a" style="left:911.5px;top:358.2px;width:27.0px;height:2px;background:#bfd2e5;border-radius:1px"></div>
<svg width="13" height="12" viewBox="0 0 13 12" style="left:914.5px;top:369.6px"><rect x="1" y="1" width="11" height="10" fill="#8aeaee"/><path d="M1 1.4 H4 L5.4 3.6 V11 M12 1.4 H9 L7.6 3.6 V11" fill="none" stroke="#2a5a66" stroke-width=".8"/><rect x="5.4" y="3.6" width="2.2" height="7.4" fill="#e6f8fa"/></svg>
<svg width="12" height="12" viewBox="0 0 12 12" style="left:915.0px;top:388.4px"><rect x="1" y="1" width="10" height="10" rx="1" fill="#f1f4f6" stroke="#555" stroke-width=".9"/><rect x="3.6" y="3.6" width="4.8" height="4.8" fill="#8aeaee" stroke="#444" stroke-width=".8"/></svg>
<svg width="14" height="14" viewBox="0 0 14 14" style="left:914.0px;top:407.8px"><path d="M1.4 6.6 L6 2 H12.6 V8.4 L8 13 H1.4Z" fill="#f1f4f6" stroke="#555" stroke-width=".8" stroke-linejoin="round"/><path d="M1.4 6.6 H8 V13 H1.4Z" fill="#8aeaee" stroke="#555" stroke-width=".8"/><path d="M8 6.6 L12.6 2" stroke="#555" stroke-width=".8"/></svg>
<svg width="3.4" height="5" viewBox="0 0 3.4 5" style="left:933.3px;top:412.3px"><path d="M.4 .4 V4.6 L3 2.5Z" fill="#222"/></svg>
<svg width="14" height="13" viewBox="0 0 14 13" style="left:914.0px;top:427.9px"><path d="M1.6 4 H8 L12.6 11.6 H5.4Z" fill="#8aeaee" stroke="#2a6a78" stroke-width=".8" stroke-linejoin="round"/><path d="M1.6 4 L4 1.4 H10 L8 4 M10 1.4 L12.6 11.6" fill="#d8f6f8" stroke="#2a6a78" stroke-width=".8" stroke-linejoin="round"/><path d="M1.6 4 V11.6 H5.4" fill="none" stroke="#2a6a78" stroke-width=".8"/></svg>
<svg width="13" height="13" viewBox="0 0 13 13" style="left:914.5px;top:447.9px"><path d="M1.4 12 V5 Q3 1.4 7 1.4 Q11 2 11.8 6 L9.6 8.4 V12Z" fill="#e9e7dc" stroke="#b0ae9e" stroke-width=".7"/><path d="M2 4.6 Q4 1.4 7.4 1.6 Q11 2.4 11.6 6 L9.4 8.2 Q8.6 5 5.4 4.6Z" fill="#7fe4ea" stroke="#2a7a88" stroke-width=".7"/></svg>
<svg width="13" height="13" viewBox="0 0 13 13" style="left:914.5px;top:467.1px"><path d="M1.4 12 V4.6 L4.6 1.4 H7 L11.8 6.4 L9.6 8.6 V12Z" fill="#e9e7dc" stroke="#b0ae9e" stroke-width=".7"/><path d="M4.6 1.6 H7 L11.6 6.4 L9.6 8.4Z" fill="#7fe4ea" stroke="#2a7a88" stroke-width=".7"/></svg>
<svg width="14" height="13" viewBox="0 0 14 13" style="left:943.0px;top:133.1px"><path d="M1.4 6 L6.4 1.6 H12.6 V7.4 L7.6 11.8 H1.4Z" fill="#f4f6f7" stroke="#555" stroke-width=".8" stroke-linejoin="round"/><path d="M1.4 6 H7.6 V11.8 H1.4Z" fill="#8aeaee" stroke="#444" stroke-width=".8"/><path d="M7.6 6 L12.6 1.6" stroke="#555" stroke-width=".8"/></svg>
<svg width="15" height="14" viewBox="0 0 15 14" style="left:942.5px;top:152.0px"><path d="M7.5 .6 V13.4" stroke="#333" stroke-width=".8" stroke-dasharray="2.6 1.2"/><ellipse cx="3.8" cy="7.4" rx="2.8" ry="2.2" fill="#d4f6f8" stroke="#3a5a66" stroke-width=".8"/><ellipse cx="11.2" cy="7.4" rx="2.8" ry="2.2" fill="#9aeef2" stroke="#3a5a66" stroke-width=".8"/><path d="M3.6 4.4 Q7.5 1.4 11.4 4.4" fill="none" stroke="#555" stroke-width=".7"/></svg>
<svg width="14" height="14" viewBox="0 0 14 14" style="left:943.0px;top:171.6px"><path d="M1.6 4 L4.2 1.4 L7.4 3.6 L12.6 6.2 V13 L8 10.4 L4.4 7.4Z" fill="#8aeaee" stroke="#2a6a78" stroke-width=".8" stroke-linejoin="round"/><path d="M4.4 7.4 L7.4 3.6 M8 10.4 L12.6 6.2 M4.4 7.4 L12.6 13" fill="none" stroke="#2a6a78" stroke-width=".6"/><path d="M1.6 4 L4.2 1.4 L7.4 3.6 L4.4 7.4Z" fill="#d8f6f8" stroke="#2a6a78" stroke-width=".6"/></svg>
<svg width="15" height="13" viewBox="0 0 15 13" style="left:942.5px;top:191.5px"><path d="M1.4 7 Q5 1.6 13.6 1.6 L12.6 7.6 Q6 7.4 3.6 12Z" fill="#d8f8e8" stroke="#555" stroke-width=".8" stroke-linejoin="round"/><path d="M6 3.6 L7.6 8.6 M9.6 2.2 L10.4 7.6 M2.6 9.4 Q6 4.8 13 4.6" fill="none" stroke="#2ab6c6" stroke-width=".8"/><path d="M7.6 8.6 Q10 7.6 12.6 7.6 L13 4.6 Q9.6 4.8 6.8 6.2Z" fill="#7fe4ea"/></svg>
<svg width="14" height="12" viewBox="0 0 14 12" style="left:943.0px;top:211.6px"><path d="M1.6 3 Q7 .6 12.4 3 V10.6 Q7 8.4 1.6 10.6Z" fill="#c8f4f6" stroke="#3a4a5a" stroke-width=".9" stroke-linejoin="round"/></svg>
<div class="a" style="left:941.6px;top:231.6px;width:18.4px;height:2px;background:#bfd2e5;border-radius:1px"></div>
<svg width="14" height="13" viewBox="0 0 14 13" style="left:943.0px;top:241.5px"><path d="M7 .6 V12.4" stroke="#b9bfc6" stroke-width=".8"/><path d="M5.4 2 V11 H1.6 Q5 7 5.4 2Z M8.6 2 V11 H12.4 Q9 7 8.6 2Z" fill="#eef1f4" stroke="#b9bfc6" stroke-width=".8" stroke-linejoin="round"/></svg>
<svg width="14" height="13" viewBox="0 0 14 13" style="left:943.0px;top:261.3px"><rect x="4.6" y="1" width="8" height="7.4" rx="1.6" fill="#eef1f4" stroke="#b9bfc6" stroke-width=".8"/><circle cx="5.4" cy="8.4" r="3.8" fill="#eef1f4" stroke="#b9bfc6" stroke-width=".8"/></svg>
<svg width="14" height="13" viewBox="0 0 14 13" style="left:943.0px;top:280.5px"><path d="M3 1.6 H12.4 V11 H8.4 V5.6 H3Z" fill="#eef1f4" stroke="#b9bfc6" stroke-width=".8"/><circle cx="4.2" cy="9.4" r="2.8" fill="#e6eaee" stroke="#b9bfc6" stroke-width=".7"/></svg>
<svg width="13" height="13" viewBox="0 0 13 13" style="left:943.5px;top:299.9px"><rect x="1" y="1" width="11" height="11" rx="1" fill="#f1f3f6" stroke="#b9bfc6" stroke-width=".8"/><path d="M3.4 3.6 h1 m1.6 0 h1 m1.6 0 h1 M3.4 6.4 h1 m1.6 0 h1 m1.6 0 h1 M3.4 9.2 h1 m1.6 0 h1 m1.6 0 h1" stroke="#a4aab2" stroke-width="1"/></svg>
<div class="a" style="left:0;top:511.6px;width:960px;height:29px;background:linear-gradient(90deg,#7f95b4 0,#8298b7 3.6%,#a6bedb 5.4%,#a9c1de 40%,#a7bfdc 81.7%,#7189ab 84%,#6b83a5 100%)"></div>
<div class="a" style="left:0;top:511.6px;width:960px;height:1px;background:#73879f"></div>
<div class="a" style="left:0;top:512.6px;width:960px;height:1px;background:rgba(255,255,255,.35)"></div>
<svg width="28" height="28" viewBox="0 0 28 28" style="left:4.75px;top:511.8px"><defs><radialGradient id="gOrb" cx=".5" cy=".92" r=".95"><stop offset="0" stop-color="#38d8f8"/><stop offset=".3" stop-color="#1a8ad0"/><stop offset=".6" stop-color="#1a5a9c"/><stop offset="1" stop-color="#123e78"/></radialGradient><linearGradient id="gOrbHi" x1="0" x2="0" y1="0" y2="1"><stop offset="0" stop-color="#fff" stop-opacity=".55"/><stop offset="1" stop-color="#fff" stop-opacity=".08"/></linearGradient></defs><circle cx="14" cy="14" r="12.7" fill="url(#gOrb)" stroke="#a4c6e4" stroke-width=".9"/><path d="M2.6 12 A11.6 11.6 0 0 1 25.4 12 Q14 16.4 2.6 12Z" fill="url(#gOrbHi)"/><path d="M8.8 7.4 Q12 5.6 15.2 7.2 L14.2 13 Q11.2 11.6 7.8 13.2Z" fill="#e8501e"/><path d="M16 7.8 Q19.2 9.6 22.8 8.2 L21.6 14.2 Q18.2 15.4 15 13.6Z" fill="#86c232"/><path d="M7.4 14.2 Q10.8 12.6 13.9 14.2 L12.9 20 Q9.8 18.6 6.4 20.2Z" fill="#3aa0ee"/><path d="M14.7 14.8 Q18 16.4 21.3 15.2 L20.3 21 Q16.8 22.2 13.7 20.6Z" fill="#f8c21c"/></svg>
<svg width="28" height="24" viewBox="0 0 28 24" style="left:49.8px;top:513.6px"><defs><linearGradient id="gIe" x1="0" x2="0" y1="0" y2="1"><stop offset="0" stop-color="#1a56b4"/><stop offset=".55" stop-color="#2a82dc"/><stop offset="1" stop-color="#48baf4"/></linearGradient></defs><path d="M4.2 19 Q1 22.6 4.6 21.6 Q9 20 14 15.4" fill="none" stroke="#f0c22a" stroke-width="1.4"/><circle cx="13.9" cy="12" r="8.7" fill="url(#gIe)" stroke="#143c86" stroke-width=".7"/><path d="M8.6 12.9 H19.9 Q19.9 6.9 14 6.7 Q8.5 7 8.5 12.4 Q8.6 17.4 14 17.5 Q17.8 17.4 19.4 14.4 H16.4 Q15.6 15.6 14 15.6 Q11.6 15.6 11.4 12.9 M11.5 10.9 Q11.9 8.7 14 8.7 Q16.3 8.7 16.7 10.9Z" fill="#f4f8fc" fill-rule="evenodd"/><path d="M6 14.6 Q9 6 21 2.6 Q26.4 1.2 23.6 6" fill="none" stroke="#f4c62e" stroke-width="1.5" stroke-linecap="round"/></svg>
<svg width="22" height="22" viewBox="0 0 22 22" style="left:94.6px;top:515.6px"><rect x="2.4" y="2" width="17" height="17" rx="1.4" fill="#7fb4e0" stroke="#5a8ec0" stroke-width=".7"/><rect x="3.4" y="3" width="15" height="9" fill="#a8d0f0" opacity=".7"/><circle cx="9.6" cy="11.4" r="6.2" fill="#f08a1c" stroke="#fff" stroke-width=".9"/><path d="M7.6 8 L13.4 11.4 L7.6 14.8Z" fill="#fff"/></svg>
<div class="a" style="left:165px;top:513px;width:5px;height:28px;box-sizing:border-box;border:1px solid #6f84a2;border-left:none;border-radius:0 2px 2px 0;background:rgba(235,242,250,.3)"></div>
<div class="a" style="left:129.0px;top:513px;width:37.6px;height:28px;box-sizing:border-box;border:1px solid #6f84a2;border-radius:2px;background:linear-gradient(180deg,rgba(255,255,255,.34) 0,rgba(230,238,248,.24) 45%,rgba(190,208,230,.2) 50%,rgba(215,228,243,.3) 100%);box-shadow:inset 0 0 0 1px rgba(255,255,255,.55)"></div>
<div class="a" style="left:260.0px;top:513px;width:40.7px;height:28px;box-sizing:border-box;border:1px solid #6f84a2;border-radius:2px;background:linear-gradient(180deg,rgba(255,255,255,.34) 0,rgba(230,238,248,.24) 45%,rgba(190,208,230,.2) 50%,rgba(215,228,243,.3) 100%);box-shadow:inset 0 0 0 1px rgba(255,255,255,.55)"></div>
<div class="a" style="left:303.4px;top:513px;width:41.0px;height:28px;box-sizing:border-box;border:1px solid #6f84a2;border-radius:2px;background:linear-gradient(180deg,rgba(255,255,255,.62) 0,rgba(235,242,250,.5) 45%,rgba(205,220,238,.45) 50%,rgba(225,235,247,.55) 100%);box-shadow:inset 0 0 0 1px rgba(255,255,255,.55)"></div>
<svg width="26" height="24" viewBox="0 0 26 24" style="left:135px;top:513.6px"><path d="M2.4 5 Q2.4 3.4 4 3.4 H9 L10.6 5.4 H21.6 Q23 5.4 23 7 V20 H2.4Z" fill="#e6c45a" stroke="#b8963a" stroke-width=".6"/><rect x="4.2" y="4.4" width="2" height="1.6" fill="#30b040"/><rect x="8.4" y="5.4" width="2" height="1.6" fill="#e03030"/><rect x="15" y="6.6" width="2" height="1.6" fill="#3a7ae0"/><path d="M2.4 9 H23 V20.6 Q23 21.6 22 21.6 H3.4 Q2.4 21.6 2.4 20.6Z" fill="#f4e29a" stroke="#c8a848" stroke-width=".6"/><path d="M6 22.4 V16.4 Q6 14.8 7.6 14.8 H18 Q19.6 14.8 19.6 16.4 V22.4 H16.6 V19 H9 V22.4Z" fill="#6fb4e8" stroke="#4a8ac8" stroke-width=".6"/></svg>
<svg width="22" height="22" viewBox="0 0 22 22" style="left:182.4px;top:514.6px"><circle cx="11" cy="11" r="10" fill="#e8e8e8"/><path d="M11 11 L2.34 6 A10 10 0 0 1 19.66 6Z" fill="#e23a2e"/><path d="M11 11 L19.66 6 A10 10 0 0 1 11 21Z" fill="#f6cc1c"/><path d="M11 11 L11 21 A10 10 0 0 1 2.34 6Z" fill="#3aa648"/><circle cx="11" cy="11" r="4.7" fill="#fff"/><circle cx="11" cy="11" r="3.7" fill="#3a82e4"/></svg>
<svg width="22" height="21" viewBox="0 0 22 21" style="left:226.2px;top:514.4px"><defs><linearGradient id="gAc" x1="0" x2="0" y1="0" y2="1"><stop offset="0" stop-color="#e02a24"/><stop offset=".55" stop-color="#b80c0c"/><stop offset="1" stop-color="#8a0606"/></linearGradient></defs><rect x="1" y="1" width="19.6" height="18.8" fill="url(#gAc)" stroke="#7a0a0a" stroke-width=".6"/><path d="M4.6 16 Q8.6 12 10 5 Q10.4 3.4 9.4 3.6 Q8.4 4.2 9.4 7 Q11.6 11.6 17 12.6 Q18.4 12.6 17 11.6 Q11 11.4 4.6 16Z" fill="none" stroke="#fff" stroke-width="1.1" stroke-linejoin="round"/></svg>
<svg width="26" height="22" viewBox="0 0 26 22" style="left:267.4px;top:514.6px"><ellipse cx="13.6" cy="8.4" rx="9.6" ry="4.8" transform="rotate(-22 13.6 8.4)" fill="none" stroke="#b85a08" stroke-width="4.6"/><ellipse cx="13.6" cy="8.4" rx="9.6" ry="4.8" transform="rotate(-22 13.6 8.4)" fill="none" stroke="#f4981c" stroke-width="3.2"/><ellipse cx="9.6" cy="15" rx="5.6" ry="2.4" transform="rotate(-22 9.6 15)" fill="#fbe6b0" stroke="#b85a08" stroke-width="3.6"/><ellipse cx="9.6" cy="15" rx="5.6" ry="2.4" transform="rotate(-22 9.6 15)" fill="#fbe6b0" stroke="#f4981c" stroke-width="2.4"/></svg>
<svg width="20" height="20" viewBox="0 0 20 20" style="left:314px;top:516.4px"><path d="M15.2 2.2 L18.4 1.4 V15.6 L15.2 18Z" fill="#16323c"/><path d="M1.8 2.6 L5 1.4 H18.4 L15.2 2.6Z" fill="#1c4652"/><rect x="1.6" y="2.4" width="14" height="15.6" fill="#52dcd8" stroke="#1f4a58" stroke-width=".8"/></svg>
<svg width="8" height="5" viewBox="0 0 8 5" style="left:810.8px;top:524.6px"><path d="M.6 4.4 H7.2 L3.9 .6Z" fill="#fff"/></svg>
<svg width="13" height="13" viewBox="0 0 13 13" style="left:825.4px;top:519.6px"><path d="M2 1 V12" stroke="#fff" stroke-width="1.2"/><path d="M2.6 1.6 Q5 .6 7 1.8 T10.8 1.8 V6.4 Q8.6 7.4 7 6.4 T2.6 6.4Z" fill="#e6ebf2" stroke="#fff" stroke-width=".5"/><circle cx="9" cy="9.4" r="3.3" fill="#e02424" stroke="#fff" stroke-width=".4"/><path d="M7.6 8 L10.4 10.8 M10.4 8 L7.6 10.8" stroke="#fff" stroke-width="1.1"/></svg>
<svg width="10" height="13" viewBox="0 0 10 13" style="left:844.4px;top:519.6px"><rect x="3.4" y=".6" width="3.2" height="1.4" fill="#fff"/><rect x="1.2" y="1.8" width="7.6" height="10.4" rx="1.8" fill="#76879f" stroke="#fff" stroke-width="1.1"/><rect x="3.4" y="4.2" width="3.2" height="6" fill="#e6ebf2"/></svg>
<svg width="14" height="12" viewBox="0 0 14 12" style="left:859.4px;top:520.6px"><path d="M1 10.4 H2.6 V8.4 H1Z M3.6 10.4 H5.2 V6.6 H3.6Z M6.2 10.4 H7.8 V4.8 H6.2Z M8.8 10.4 H10.4 V2.6 H8.8Z M11.4 10.4 H12.8 V.8 H11.4Z" fill="#4b5a70"/><path d="M5.4 5.2 L11 10.8 M11 5.2 L5.4 10.8" stroke="#e81c1c" stroke-width="1.6"/></svg>
<svg width="13" height="12" viewBox="0 0 13 12" style="left:875.8px;top:520px"><path d="M1 4.2 H3.2 L6.4 1 V11 L3.2 7.8 H1Z" fill="#f1f4f8" stroke="#fff" stroke-width=".5"/><path d="M8 3.6 Q9.6 6 8 8.4 M9.8 2 Q12.4 6 9.8 10" fill="none" stroke="#fff" stroke-width=".9"/></svg>
<div class="t" style="left:890px;width:62px;text-align:center;top:517.2px;font-size:8.3px;color:#fff">9:33 PM</div>
<div class="t" style="left:890px;width:62px;text-align:center;top:528.6px;font-size:8.3px;color:#fff">15/06/2014</div>
<div class="a" style="left:948.6px;top:512.6px;width:11.4px;height:28px;box-sizing:border-box;border-left:1px solid #44546c;background:linear-gradient(180deg,#8a9cb6 0,#5f7290 50%,#4e6180 100%);box-shadow:inset 1px 0 0 rgba(255,255,255,.4)"></div>
</body></html>
